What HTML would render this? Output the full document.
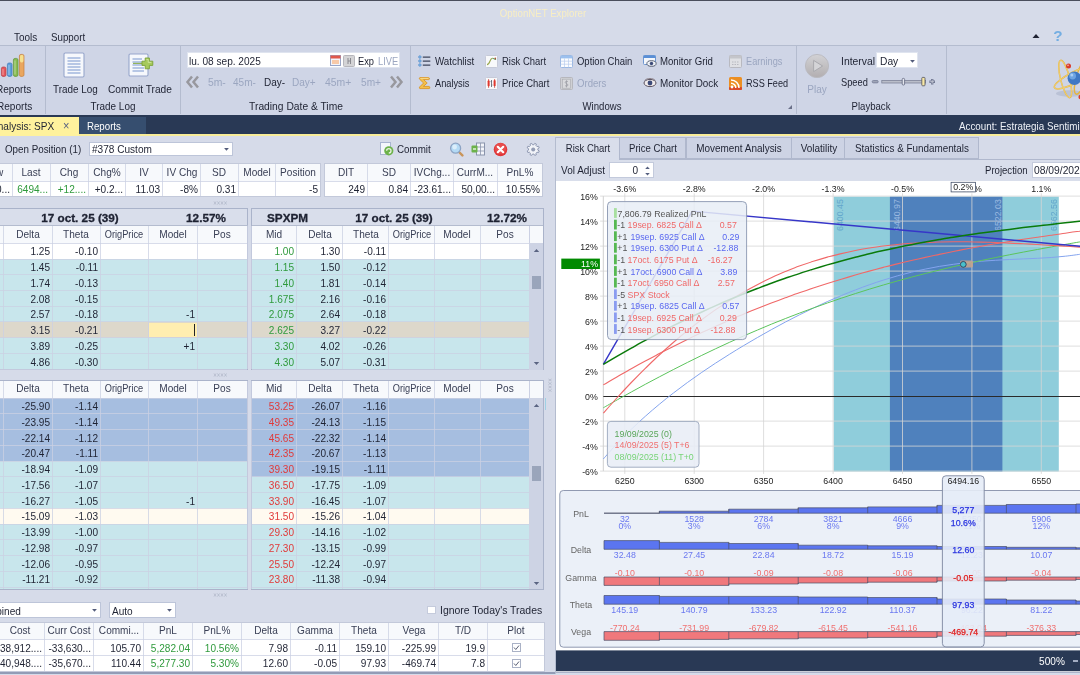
<!DOCTYPE html>
<html><head><meta charset="utf-8"><title>OptionNET Explorer</title>
<style>
html,body{margin:0;padding:0;}
body{width:1080px;height:675px;overflow:hidden;background:#d6dbe9;position:relative;font-family:"Liberation Sans",sans-serif;font-size:11px;color:#1e2232;}
#app{position:absolute;left:0;top:0;width:1080px;height:675px;overflow:hidden;opacity:.999;}
.t{position:absolute;height:16px;line-height:16px;white-space:nowrap;font-size:11px;transform:scaleX(.915);}
.r{position:absolute;}
.g{color:#9ba6c0;}
.b{font-weight:bold;transform:scaleX(1.02);-webkit-text-stroke:0.3px currentColor;}
.w{color:#fff;}
svg{position:absolute;overflow:hidden;}
</style></head>
<body>
<div id="app">
<div class="r" style="left:0.00px;top:0.00px;width:1080.00px;height:1.00px;background:#4a4e5c;"></div>
<div class="t " style="top:5.00px;left:443.30px;width:200px;text-align:center;transform:scaleX(0.880);color:#f8eec4;">OptionNET Explorer</div>
<div class="t " style="top:28.50px;left:13.50px;transform-origin:0 50%;transform:scaleX(0.903);">Tools</div>
<div class="t " style="top:28.50px;left:51.00px;transform-origin:0 50%;transform:scaleX(0.885);">Support</div>
<svg style="left:1031px;top:31.5px" width="10" height="8"><path d="M1.5 6 L5 2 L8.5 6 Z" fill="#1e2232"/></svg>
<div class="t b" style="top:27.90px;left:957.80px;width:200px;text-align:center;color:#74aee2;font-size:15px;-webkit-text-stroke:0;">?</div>
<div class="r" style="left:0.00px;top:45.50px;width:1080.00px;height:69.00px;background:#cfd5e6;"></div>
<div class="r" style="left:0.00px;top:45.00px;width:1080.00px;height:1.20px;background:#b4bccf;"></div>
<div class="r" style="left:44.80px;top:46.00px;width:1.20px;height:68.40px;background:#b4bccf;"></div>
<div class="r" style="left:179.90px;top:46.00px;width:1.20px;height:68.40px;background:#b4bccf;"></div>
<div class="r" style="left:409.90px;top:46.00px;width:1.20px;height:68.40px;background:#b4bccf;"></div>
<div class="r" style="left:795.60px;top:46.00px;width:1.20px;height:68.40px;background:#b4bccf;"></div>
<div class="r" style="left:946.10px;top:46.00px;width:1.20px;height:68.40px;background:#b4bccf;"></div>
<svg style="left:0px;top:52px" width="28" height="26" viewBox="0 0 28 26">
<rect x="1.4" y="15" width="4.6" height="9.4" rx="1.6" fill="#e4585e" stroke="#b43c44" stroke-width="0.7"/>
<rect x="7.4" y="11" width="4.6" height="13.4" rx="1.6" fill="#5f9fdc" stroke="#3f78b6" stroke-width="0.7"/>
<rect x="13.4" y="6.4" width="4.6" height="18" rx="1.6" fill="#88bb52" stroke="#5e963a" stroke-width="0.7"/>
<rect x="19.4" y="2.4" width="4.6" height="22" rx="1.6" fill="#eaa65e" stroke="#c4803c" stroke-width="0.7"/>
<rect x="20" y="3" width="3.4" height="7.4" rx="1.4" fill="#f6e08e"/>
<path d="M3 17v6M9 13v10M15 8.6v14" stroke="#fff" stroke-opacity=".35" stroke-width="1.2"/>
</svg>
<div class="t " style="top:80.50px;left:-3.80px;transform-origin:0 50%;">Reports</div>
<div class="t " style="top:98.20px;left:-3.00px;transform-origin:0 50%;">Reports</div>
<svg style="left:63px;top:52px" width="24" height="27" viewBox="0 0 24 27">
<rect x="1" y="1" width="20" height="24" rx="1.2" fill="#f6f8fc" stroke="#97a6cb" stroke-width="1.1"/>
<g stroke="#a3b6dd" stroke-width="1.5"><path d="M4.5 6H17.5M4.5 9H17.5M4.5 12H17.5M4.5 15H17.5M4.5 18H17.5M4.5 21H17.5"/></g>
</svg>
<div class="t " style="top:80.50px;left:52.80px;transform-origin:0 50%;transform:scaleX(0.901);">Trade Log</div>
<svg style="left:128px;top:52px" width="28" height="27" viewBox="0 0 28 27">
<rect x="1" y="2" width="19" height="22" rx="1.2" fill="#f6f8fc" stroke="#97a6cb" stroke-width="1.1"/>
<g stroke="#a3b6dd" stroke-width="1.5"><path d="M4.5 7H14M4.5 10H14M4.5 13H16M4.5 16H16M4.5 19H16"/></g>
<path d="M5 11.4H15" stroke="#8fb050" stroke-width="1.1"/>
<path d="M17.2 6H21.4V9.2H24.8V13.4H21.4V16.8H17.2V13.4H14V9.2H17.2Z" fill="#a6ca5c" stroke="#7aa338" stroke-width="0.9" stroke-linejoin="round"/>
<path d="M18.4 7.4H20.2V10.4H23.4" stroke="#d2e6a0" stroke-width="0.9" fill="none"/>
</svg>
<div class="t " style="top:80.50px;left:108.00px;transform-origin:0 50%;transform:scaleX(0.925);">Commit Trade</div>
<div class="t " style="top:98.20px;left:13.00px;width:200px;text-align:center;transform:scaleX(0.901);">Trade Log</div>
<div class="r" style="left:187.10px;top:52.40px;width:213.00px;height:16.00px;background:#fff;border:1px solid #dfe4ef;box-sizing:border-box;"></div>
<div class="t " style="top:52.70px;left:189.40px;transform-origin:0 50%;transform:scaleX(0.917);">lu. 08 sep. 2025</div>
<svg style="left:330px;top:55px" width="11" height="11" viewBox="0 0 11 11">
<rect x="0.5" y="0.5" width="10" height="10" fill="#f3f4fa" stroke="#9aa6c8"/><rect x="0.5" y="0.5" width="10" height="3" fill="#e0584c"/>
<rect x="2" y="5" width="7" height="4" fill="#f7c9a8"/></svg>
<svg style="left:343px;top:54.5px" width="12" height="12" viewBox="0 0 12 12">
<rect x="0.5" y="0.5" width="11" height="11" rx="1" fill="#d4d4d6" stroke="#b6b6bc"/><path d="M5 3v6M7.5 3v6M5 6h2.5" stroke="#8a8a90" stroke-width="1"/></svg>
<div class="t " style="top:52.70px;left:357.90px;transform-origin:0 50%;transform:scaleX(0.844);">Exp</div>
<div class="t g" style="top:52.70px;left:377.70px;transform-origin:0 50%;transform:scaleX(0.847);">LIVE</div>
<svg style="left:185px;top:75px" width="16" height="14" viewBox="0 0 16 14"><path d="M7 1.5L2.5 7L7 12.5M13 1.5L8.5 7L13 12.5" stroke="#98989e" stroke-width="2.5" fill="none"/></svg>
<svg style="left:388px;top:75px" width="16" height="14" viewBox="0 0 16 14"><path d="M3 1.5L7.5 7L3 12.5M9 1.5L13.5 7L9 12.5" stroke="#98989e" stroke-width="2.5" fill="none"/></svg>
<div class="t g" style="top:74.20px;left:207.90px;transform-origin:0 50%;transform:scaleX(0.940);">5m-</div>
<div class="t g" style="top:74.20px;left:233.20px;transform-origin:0 50%;transform:scaleX(0.910);">45m-</div>
<div class="t " style="top:74.20px;left:263.90px;transform-origin:0 50%;transform:scaleX(0.909);">Day-</div>
<div class="t g" style="top:74.20px;left:292.30px;transform-origin:0 50%;transform:scaleX(0.912);">Day+</div>
<div class="t g" style="top:74.20px;left:325.40px;transform-origin:0 50%;transform:scaleX(0.945);">45m+</div>
<div class="t g" style="top:74.20px;left:360.60px;transform-origin:0 50%;transform:scaleX(0.922);">5m+</div>
<div class="t " style="top:98.20px;left:195.90px;width:200px;text-align:center;transform:scaleX(0.934);">Trading Date &amp; Time</div>
<svg style="left:418px;top:54px" width="13" height="14" viewBox="0 0 13 14">
<g fill="#8cbdea" stroke="#4d88c9" stroke-width="0.7"><circle cx="1.9" cy="3" r="1.25"/><circle cx="1.9" cy="7" r="1.25"/><circle cx="1.9" cy="11" r="1.25"/></g>
<path d="M4.8 3H12.3M4.8 7H12.3M4.8 11H12.3" stroke="#3f465c" stroke-width="1.25"/></svg>
<div class="t " style="top:53.10px;left:434.60px;transform-origin:0 50%;transform:scaleX(0.889);">Watchlist</div>
<svg style="left:418px;top:75.5px" width="13" height="14" viewBox="0 0 13 14">
<path d="M1.8 1.6H10.6Q11.6 1.6 11.4 3.2L10.8 3.6H5.6L9.2 7L5.4 10.4H11.2Q12 10.6 11.8 12.2L11 12.6H1.8Q1 12 1.6 11L5.6 7L1.6 3.2Q1 2.2 1.8 1.6Z" fill="#f4c04a" stroke="#d9952a" stroke-width="0.9" stroke-linejoin="round"/><path d="M2.4 2.4H10.4" stroke="#fbe29a" stroke-width="0.8"/></svg>
<div class="t " style="top:74.90px;left:434.60px;transform-origin:0 50%;transform:scaleX(0.840);">Analysis</div>
<svg style="left:485px;top:54.5px" width="13" height="13" viewBox="0 0 13 13">
<rect x="0.5" y="0.5" width="12" height="12" rx="1" fill="#f8f9fb" stroke="#c6cad8"/>
<path d="M2 9.6C5.2 9.6 4.6 3.2 7.4 3.2" stroke="#9aa84e" stroke-width="1.1" fill="none"/><path d="M7.4 3.2C9.4 3.2 9.4 5 11 4.2" stroke="#6aa05c" stroke-width="1.1" fill="none"/><circle cx="10.3" cy="3.4" r="0.8" fill="#b04a3a"/></svg>
<div class="t " style="top:53.10px;left:501.70px;transform-origin:0 50%;transform:scaleX(0.857);">Risk Chart</div>
<svg style="left:485px;top:76.5px" width="13" height="13" viewBox="0 0 13 13">
<rect x="0.5" y="0.5" width="12" height="12" rx="1" fill="#f8f9fb" stroke="#c6cad8"/>
<path d="M3.6 2.2v8.6M9.6 2.2v8.6" stroke="#c8352b" stroke-width="0.8"/><rect x="2.6" y="3.6" width="2" height="5.6" rx="0.6" fill="#e0382e"/><rect x="8.6" y="3.2" width="2" height="5.8" rx="0.6" fill="#e0382e"/>
<path d="M6.5 3v7M5.6 4.6h0.9M6.5 8h0.9" stroke="#555a68" stroke-width="0.8"/></svg>
<div class="t " style="top:74.90px;left:501.70px;transform-origin:0 50%;transform:scaleX(0.860);">Price Chart</div>
<svg style="left:560px;top:54.5px" width="13" height="13" viewBox="0 0 13 13">
<rect x="0.5" y="0.5" width="12" height="12" rx="1" fill="#fcfdff" stroke="#9cb8e2"/><rect x="0.8" y="0.8" width="11.4" height="2.6" fill="#9cc0ee"/>
<path d="M0.5 6.2h12M0.5 9.2h12M4.5 3.4v9M8.5 3.4v9" stroke="#b9cdee" stroke-width="0.7"/></svg>
<div class="t " style="top:53.10px;left:576.80px;transform-origin:0 50%;transform:scaleX(0.861);">Option Chain</div>
<svg style="left:560px;top:76.5px" width="13" height="13" viewBox="0 0 13 13">
<rect x="0.5" y="0.5" width="12" height="12" rx="1" fill="#cfd0d4" stroke="#b6b7bd"/><rect x="2.6" y="2.2" width="7.8" height="9" fill="#d9dadd" stroke="#aaabb1" stroke-width="0.6"/>
<path d="M8 4.8C7.4 4 5.2 4 5.2 5.4S8 6.6 8 8S5.6 9.4 5 8.4M6.5 3.4v7" stroke="#9c9da4" stroke-width="0.8" fill="none"/></svg>
<div class="t g" style="top:74.90px;left:576.80px;transform-origin:0 50%;transform:scaleX(0.872);">Orders</div>
<svg style="left:643px;top:54px" width="14" height="14" viewBox="0 0 14 14">
<rect x="0.5" y="1.5" width="12" height="9" rx="1" fill="#f4f7fc" stroke="#6f97d0"/><rect x="0.5" y="1.5" width="12" height="2.5" fill="#5a8fd6"/>
<ellipse cx="8.5" cy="9.5" rx="4.6" ry="2.8" fill="#eef1f6" stroke="#4a5268" stroke-width="0.9"/><circle cx="8.5" cy="9.5" r="1.7" fill="#3c4a78"/></svg>
<div class="t " style="top:53.10px;left:660.00px;transform-origin:0 50%;transform:scaleX(0.874);">Monitor Grid</div>
<svg style="left:643px;top:76px" width="14" height="14" viewBox="0 0 14 14">
<ellipse cx="7" cy="7" rx="6" ry="3.6" fill="#f1ecec" stroke="#5a5260" stroke-width="1"/><circle cx="7" cy="7" r="2.4" fill="#3c4a78"/><path d="M1.5 4.5C4 1.8 10 1.8 12.5 4.5" stroke="#8a7f86" stroke-width="0.9" fill="none"/></svg>
<div class="t " style="top:74.90px;left:660.00px;transform-origin:0 50%;transform:scaleX(0.898);">Monitor Dock</div>
<svg style="left:729px;top:54.5px" width="13" height="13" viewBox="0 0 13 13">
<rect x="0.5" y="0.5" width="12" height="12" rx="1" fill="#dfe0e4" stroke="#b8b9c0"/><rect x="0.5" y="0.5" width="12" height="3" fill="#c4c5ca"/><path d="M3 7h7M3 9.5h7" stroke="#b8b9c0" stroke-width="1.2" stroke-dasharray="1.5 1"/></svg>
<div class="t g" style="top:53.10px;left:746.20px;transform-origin:0 50%;transform:scaleX(0.838);">Earnings</div>
<svg style="left:729px;top:76.5px" width="13" height="13" viewBox="0 0 13 13">
<rect x="0" y="0" width="13" height="13" rx="1.5" fill="#ec8f22"/><rect x="0" y="10" width="13" height="3" rx="1" fill="#d94a2a"/>
<circle cx="3" cy="10" r="1.4" fill="#fff"/><path d="M2 6.2A4.8 4.8 0 0 1 6.8 11M2 3A8 8 0 0 1 10 11" stroke="#fff" stroke-width="1.5" fill="none"/></svg>
<div class="t " style="top:74.90px;left:746.20px;transform-origin:0 50%;transform:scaleX(0.828);">RSS Feed</div>
<div class="t " style="top:98.20px;left:501.50px;width:200px;text-align:center;transform:scaleX(0.872);">Windows</div>
<svg style="left:787px;top:104px" width="6" height="6"><path d="M5 1V5H1Z" fill="#6a7088"/></svg>
<svg style="left:804px;top:53px" width="26" height="26" viewBox="0 0 26 26">
<defs><linearGradient id="pg" x1="0" y1="0" x2="0" y2="1"><stop offset="0" stop-color="#d2d2d5"/><stop offset="1" stop-color="#b2aeb0"/></linearGradient></defs>
<circle cx="13" cy="13" r="11.6" fill="url(#pg)" stroke="#b9b9be" stroke-width="0.9"/>
<path d="M9.6 7.4L18.6 13L9.6 18.6Z" fill="#d4d4d7" stroke="#a9a9ae" stroke-width="1" stroke-linejoin="round"/>
</svg>
<div class="t g" style="top:80.90px;left:716.70px;width:200px;text-align:center;">Play</div>
<div class="t " style="top:53.10px;left:841.00px;transform-origin:0 50%;transform:scaleX(0.943);">Interval</div>
<div class="r" style="left:876.20px;top:52.30px;width:42.30px;height:16.20px;background:#fff;border:1px solid #dfe4ef;box-sizing:border-box;"></div>
<div class="t " style="top:53.10px;left:880.00px;transform-origin:0 50%;transform:scaleX(0.930);">Day</div>
<svg style="left:908.5px;top:59px" width="7" height="5"><path d="M1.1 0.9H5.9L3.5 3.7Z" fill="#525b7a"/></svg>
<div class="t " style="top:74.20px;left:841.00px;transform-origin:0 50%;transform:scaleX(0.843);">Speed</div>
<svg style="left:870px;top:75px" width="68" height="14" viewBox="0 0 68 14">
<rect x="2.2" y="5.5" width="6" height="2.4" rx="1.1" fill="#9ea4b6" stroke="#6f7690" stroke-width="0.7"/>
<rect x="11.8" y="5.4" width="43.8" height="2.6" fill="#b9bdc9" stroke="#7d8398" stroke-width="0.8"/>
<rect x="32.2" y="3.4" width="2.4" height="6.6" rx="1" fill="#e4e6ee" stroke="#5f667e" stroke-width="0.8"/>
<rect x="51.8" y="2.4" width="3.2" height="8.4" rx="0.8" fill="#f8e8a4" stroke="#5f5f68" stroke-width="0.9"/>
<path d="M59.4 6.7h5.6M62.2 3.9v5.6" stroke="#6f7690" stroke-width="2.4"/><path d="M60.2 6.7h4M62.2 4.7v4" stroke="#c4c8d6" stroke-width="0.9"/>
</svg>
<div class="t " style="top:98.20px;left:771.20px;width:200px;text-align:center;transform:scaleX(0.872);">Playback</div>
<svg style="left:1050px;top:50px" width="30" height="56" viewBox="1050 50 30 56">
<ellipse cx="1070" cy="93.5" rx="14" ry="3.2" fill="#aab2c8" opacity=".55"/>
<g fill="none" stroke="#e6b43e" stroke-width="1.5">
<ellipse cx="1065.2" cy="79" rx="4.6" ry="19.2" transform="rotate(-14 1065.2 79)"/>
<ellipse cx="1074.5" cy="77.5" rx="22.5" ry="5.6" transform="rotate(-27 1074.5 77.5)"/>
<ellipse cx="1082" cy="76" rx="5.2" ry="19" transform="rotate(18 1082 76)"/></g>
<g fill="none" stroke="#f5dc8a" stroke-width="0.6">
<ellipse cx="1065.2" cy="79" rx="4.6" ry="19.2" transform="rotate(-14 1065.2 79)"/>
<ellipse cx="1074.5" cy="77.5" rx="22.5" ry="5.6" transform="rotate(-27 1074.5 77.5)"/></g>
<circle cx="1074.4" cy="78.2" r="6.8" fill="#3f78c4"/><circle cx="1072.6" cy="76" r="3.4" fill="#6ea4e2"/><circle cx="1071.8" cy="75" r="1.5" fill="#a9cdf4"/>
<circle cx="1068.5" cy="66" r="2.5" fill="#d93a2b"/><circle cx="1068" cy="65.3" r="0.9" fill="#f4a49a"/><circle cx="1080.6" cy="97" r="2.2" fill="#d93a2b"/>
</svg>
<div class="r" style="left:0.00px;top:114.60px;width:1080.00px;height:20.40px;background:#293955;"></div>
<div class="r" style="left:0.00px;top:134.30px;width:1080.00px;height:1.80px;background:#f8ec98;"></div>
<div class="r" style="left:0.00px;top:116.70px;width:78.70px;height:19.00px;background:#fff29d;"></div>
<div class="r" style="left:78.70px;top:117.20px;width:67.30px;height:17.10px;background:#364e6f;"></div>
<div class="t " style="top:118.00px;left:-8.60px;transform-origin:0 50%;">Analysis: SPX</div>
<div class="t " style="top:118.40px;left:62.70px;transform-origin:0 50%;font-size:12px;color:#586282;">×</div>
<div class="t w" style="top:118.00px;left:87.40px;transform-origin:0 50%;transform:scaleX(0.880);">Reports</div>
<div class="t w" style="top:117.60px;left:958.60px;transform-origin:0 50%;transform:scaleX(0.893);color:#eef1f7;">Account: Estrategia Sentimiento</div>
<div class="t " style="top:141.20px;left:4.70px;transform-origin:0 50%;transform:scaleX(0.890);">Open Position (1)</div>
<div class="r" style="left:89.40px;top:141.70px;width:144.00px;height:14.40px;background:#fff;border:1px solid #bdc5d9;box-sizing:border-box;"></div><div class="t " style="top:141.20px;left:92.00px;transform-origin:0 50%;">#378 Custom</div><svg style="left:222.9px;top:146.9px" width="7" height="5"><path d="M1.1 0.9H5.9L3.5 3.7Z" fill="#525b7a"/></svg>
<svg style="left:380px;top:142px" width="14" height="14" viewBox="0 0 14 14">
<rect x="0.5" y="0.5" width="10" height="12" fill="#f4f6fb" stroke="#a9b4d0"/><circle cx="8.8" cy="8.8" r="4.6" fill="#6cb24a"/><path d="M6.6 8.8A2.2 2.2 0 1 1 8.8 11" stroke="#e8f3df" stroke-width="1.3" fill="none"/></svg>
<div class="t " style="top:141.40px;left:396.50px;transform-origin:0 50%;transform:scaleX(0.890);">Commit</div>
<svg style="left:449px;top:141.5px" width="15" height="15" viewBox="0 0 15 15">
<path d="M10 10L13.4 13.4" stroke="#c9955a" stroke-width="2.4" stroke-linecap="round"/><circle cx="6.6" cy="6.2" r="5" fill="#b4daf5" stroke="#8da4c4" stroke-width="1.3"/><circle cx="5.6" cy="5" r="2.4" fill="#dbeefb"/></svg>
<svg style="left:470.5px;top:142px" width="14" height="14" viewBox="0 0 14 14">
<rect x="5.5" y="1" width="8" height="12" fill="#f4f6fb" stroke="#8a94ac"/><path d="M5.5 5h8M5.5 9h8M9.5 1v12" stroke="#8a94ac" stroke-width="0.8"/>
<rect x="0.5" y="3.5" width="6" height="7" rx="1" fill="#6cb24a"/><path d="M2 7h3" stroke="#fff" stroke-width="1.2"/></svg>
<svg style="left:492.5px;top:141.5px" width="15" height="15" viewBox="0 0 15 15">
<circle cx="7.5" cy="7.5" r="6.8" fill="#e0383a"/><circle cx="7.5" cy="6.5" r="5.5" fill="#ec5c58" opacity=".6"/><path d="M4.8 4.8L10.2 10.2M10.2 4.8L4.8 10.2" stroke="#fff" stroke-width="2.2" stroke-linecap="round"/></svg>
<svg style="left:525.5px;top:141.5px" width="15" height="15" viewBox="0 0 15 15">
<path d="M11.85 8.10L13.21 8.94L12.54 10.56L10.98 10.19L9.99 11.18L10.36 12.74L8.74 13.41L7.90 12.05L6.50 12.05L5.66 13.41L4.04 12.74L4.41 11.18L3.42 10.19L1.86 10.56L1.19 8.94L2.55 8.10L2.55 6.70L1.19 5.86L1.86 4.24L3.42 4.61L4.41 3.62L4.04 2.06L5.66 1.39L6.50 2.75L7.90 2.75L8.74 1.39L10.36 2.06L9.99 3.62L10.98 4.61L12.54 4.24L13.21 5.86L11.85 6.70Z" fill="#f1f3f8" stroke="#8791ab" stroke-width="0.9" stroke-linejoin="round"/><circle cx="7.2" cy="7.4" r="2" fill="#939cb4"/></svg>
<div class="r" style="left:-25.20px;top:163.90px;width:345.80px;height:17.30px;background:#f7f9fc;"></div>
<div class="t " style="top:163.75px;left:-106.40px;width:200px;text-align:center;color:#3a4056;">Low</div>
<div class="t " style="top:163.75px;left:-68.60px;width:200px;text-align:center;color:#3a4056;">Last</div>
<div class="t " style="top:163.75px;left:-30.80px;width:200px;text-align:center;color:#3a4056;">Chg</div>
<div class="t " style="top:163.75px;left:6.80px;width:200px;text-align:center;color:#3a4056;">Chg%</div>
<div class="t " style="top:163.75px;left:44.20px;width:200px;text-align:center;color:#3a4056;">IV</div>
<div class="t " style="top:163.75px;left:81.70px;width:200px;text-align:center;color:#3a4056;">IV Chg</div>
<div class="t " style="top:163.75px;left:119.45px;width:200px;text-align:center;color:#3a4056;">SD</div>
<div class="t " style="top:163.75px;left:156.85px;width:200px;text-align:center;color:#3a4056;">Model</div>
<div class="t " style="top:163.75px;left:198.00px;width:200px;text-align:center;color:#3a4056;">Position</div>
<div class="r" style="left:-25.20px;top:181.20px;width:345.80px;height:15.60px;background:#fff;"></div>
<div class="t " style="top:181.30px;left:-190.50px;width:200px;text-align:right;transform-origin:100% 50%;">6460...</div>
<div class="t " style="top:181.30px;left:-152.10px;width:200px;text-align:right;transform-origin:100% 50%;"><span style="color:#2f9a3c">6494...</span></div>
<div class="t " style="top:181.30px;left:-114.50px;width:200px;text-align:right;transform-origin:100% 50%;"><span style="color:#2f9a3c">+12....</span></div>
<div class="t " style="top:181.30px;left:-76.90px;width:200px;text-align:right;transform-origin:100% 50%;">+0.2...</div>
<div class="t " style="top:181.30px;left:-39.70px;width:200px;text-align:right;transform-origin:100% 50%;">11.03</div>
<div class="t " style="top:181.30px;left:-1.90px;width:200px;text-align:right;transform-origin:100% 50%;">-8%</div>
<div class="t " style="top:181.30px;left:35.80px;width:200px;text-align:right;transform-origin:100% 50%;">0.31</div>
<div class="t " style="top:181.30px;left:118.10px;width:200px;text-align:right;transform-origin:100% 50%;">-5</div>
<div class="r" style="left:-25.70px;top:163.90px;width:1.00px;height:32.90px;background:#cbd0e3;opacity:.75;"></div>
<div class="r" style="left:11.90px;top:163.90px;width:1.00px;height:32.90px;background:#cbd0e3;opacity:.75;"></div>
<div class="r" style="left:49.90px;top:163.90px;width:1.00px;height:32.90px;background:#cbd0e3;opacity:.75;"></div>
<div class="r" style="left:87.50px;top:163.90px;width:1.00px;height:32.90px;background:#cbd0e3;opacity:.75;"></div>
<div class="r" style="left:125.10px;top:163.90px;width:1.00px;height:32.90px;background:#cbd0e3;opacity:.75;"></div>
<div class="r" style="left:162.30px;top:163.90px;width:1.00px;height:32.90px;background:#cbd0e3;opacity:.75;"></div>
<div class="r" style="left:200.10px;top:163.90px;width:1.00px;height:32.90px;background:#cbd0e3;opacity:.75;"></div>
<div class="r" style="left:237.80px;top:163.90px;width:1.00px;height:32.90px;background:#cbd0e3;opacity:.75;"></div>
<div class="r" style="left:274.90px;top:163.90px;width:1.00px;height:32.90px;background:#cbd0e3;opacity:.75;"></div>
<div class="r" style="left:320.10px;top:163.90px;width:1.00px;height:32.90px;background:#cbd0e3;opacity:.75;"></div>
<div class="r" style="left:-25.20px;top:180.70px;width:345.80px;height:1.00px;background:#cbd0e3;opacity:.75;"></div>
<div class="r" style="left:-25.20px;top:196.30px;width:345.80px;height:1.00px;background:#cbd0e3;opacity:.75;"></div>
<div class="r" style="left:-1.00px;top:163.30px;width:322.10px;height:34.20px;background:transparent;border:1px solid #c3c9da;box-sizing:border-box;"></div>
<div class="r" style="left:324.40px;top:163.90px;width:217.80px;height:17.30px;background:#f7f9fc;"></div>
<div class="t " style="top:163.75px;left:245.80px;width:200px;text-align:center;color:#3a4056;">DIT</div>
<div class="t " style="top:163.75px;left:289.00px;width:200px;text-align:center;color:#3a4056;">SD</div>
<div class="t " style="top:163.75px;left:332.30px;width:200px;text-align:center;color:#3a4056;">IVChg...</div>
<div class="t " style="top:163.75px;left:375.40px;width:200px;text-align:center;color:#3a4056;">CurrM...</div>
<div class="t " style="top:163.75px;left:419.60px;width:200px;text-align:center;color:#3a4056;">PnL%</div>
<div class="r" style="left:324.40px;top:181.20px;width:217.80px;height:15.60px;background:#fff;"></div>
<div class="t " style="top:181.30px;left:164.70px;width:200px;text-align:right;transform-origin:100% 50%;">249</div>
<div class="t " style="top:181.30px;left:208.30px;width:200px;text-align:right;transform-origin:100% 50%;">0.84</div>
<div class="t " style="top:181.30px;left:251.30px;width:200px;text-align:right;transform-origin:100% 50%;">-23.61...</div>
<div class="t " style="top:181.30px;left:294.50px;width:200px;text-align:right;transform-origin:100% 50%;">50,00...</div>
<div class="t " style="top:181.30px;left:339.70px;width:200px;text-align:right;transform-origin:100% 50%;">10.55%</div>
<div class="r" style="left:323.90px;top:163.90px;width:1.00px;height:32.90px;background:#cbd0e3;opacity:.75;"></div>
<div class="r" style="left:366.70px;top:163.90px;width:1.00px;height:32.90px;background:#cbd0e3;opacity:.75;"></div>
<div class="r" style="left:410.30px;top:163.90px;width:1.00px;height:32.90px;background:#cbd0e3;opacity:.75;"></div>
<div class="r" style="left:453.30px;top:163.90px;width:1.00px;height:32.90px;background:#cbd0e3;opacity:.75;"></div>
<div class="r" style="left:496.50px;top:163.90px;width:1.00px;height:32.90px;background:#cbd0e3;opacity:.75;"></div>
<div class="r" style="left:541.70px;top:163.90px;width:1.00px;height:32.90px;background:#cbd0e3;opacity:.75;"></div>
<div class="r" style="left:324.40px;top:180.70px;width:217.80px;height:1.00px;background:#cbd0e3;opacity:.75;"></div>
<div class="r" style="left:324.40px;top:196.30px;width:217.80px;height:1.00px;background:#cbd0e3;opacity:.75;"></div>
<div class="r" style="left:323.90px;top:163.30px;width:218.80px;height:34.20px;background:transparent;border:1px solid #c3c9da;box-sizing:border-box;"></div>
<svg style="left:213.4px;top:200.6px" width="14" height="4" viewBox="0 0 14 4"><path d="M1 0.5L3 3.5M3 0.5L1 3.5M4.5 0.5L6.5 3.5M6.5 0.5L4.5 3.5M8 0.5L10 3.5M10 0.5L8 3.5M11.5 0.5L13.5 3.5M13.5 0.5L11.5 3.5" stroke="#aeb4c6" stroke-width="0.7"/></svg>
<div class="r" style="left:-1.00px;top:207.60px;width:249.00px;height:162.40px;background:#d9deeb;border:1px solid #aab3ca;box-sizing:border-box;"></div>
<div class="r" style="left:0.00px;top:225.20px;width:247.50px;height:1.00px;background:#b4bccf;"></div>
<div class="t b" style="top:209.80px;left:-20.50px;width:200px;text-align:center;font-size:11.5px;">17 oct. 25 (39)</div>
<div class="t b" style="top:209.80px;left:105.50px;width:200px;text-align:center;font-size:11.5px;">12.57%</div>
<div class="r" style="left:-45.00px;top:226.00px;width:292.00px;height:17.30px;background:#f7f9fc;"></div>
<div class="t " style="top:225.85px;left:-120.85px;width:200px;text-align:center;color:#3a4056;">Mid</div>
<div class="t " style="top:225.85px;left:-72.35px;width:200px;text-align:center;color:#3a4056;">Delta</div>
<div class="t " style="top:225.85px;left:-23.85px;width:200px;text-align:center;color:#3a4056;">Theta</div>
<div class="t " style="top:225.85px;left:24.45px;width:200px;text-align:center;transform:scaleX(0.840);color:#3a4056;">OrigPrice</div>
<div class="t " style="top:225.85px;left:73.00px;width:200px;text-align:center;color:#3a4056;">Model</div>
<div class="t " style="top:225.85px;left:122.20px;width:200px;text-align:center;color:#3a4056;">Pos</div>
<div class="r" style="left:-45.00px;top:243.30px;width:292.00px;height:15.73px;background:#fff;"></div>
<div class="t " style="top:243.47px;left:-199.60px;width:200px;text-align:right;transform-origin:100% 50%;color:#2f9a3c;">0.95</div>
<div class="t " style="top:243.47px;left:-150.50px;width:200px;text-align:right;transform-origin:100% 50%;">1.25</div>
<div class="t " style="top:243.47px;left:-102.20px;width:200px;text-align:right;transform-origin:100% 50%;">-0.10</div>
<div class="r" style="left:-45.00px;top:259.03px;width:292.00px;height:15.73px;background:#c8e6ec;"></div>
<div class="t " style="top:259.20px;left:-199.60px;width:200px;text-align:right;transform-origin:100% 50%;color:#2f9a3c;">1.10</div>
<div class="t " style="top:259.20px;left:-150.50px;width:200px;text-align:right;transform-origin:100% 50%;">1.45</div>
<div class="t " style="top:259.20px;left:-102.20px;width:200px;text-align:right;transform-origin:100% 50%;">-0.11</div>
<div class="r" style="left:-45.00px;top:274.76px;width:292.00px;height:15.73px;background:#c8e6ec;"></div>
<div class="t " style="top:274.93px;left:-199.60px;width:200px;text-align:right;transform-origin:100% 50%;color:#2f9a3c;">1.35</div>
<div class="t " style="top:274.93px;left:-150.50px;width:200px;text-align:right;transform-origin:100% 50%;">1.74</div>
<div class="t " style="top:274.93px;left:-102.20px;width:200px;text-align:right;transform-origin:100% 50%;">-0.13</div>
<div class="r" style="left:-45.00px;top:290.49px;width:292.00px;height:15.73px;background:#c8e6ec;"></div>
<div class="t " style="top:290.66px;left:-199.60px;width:200px;text-align:right;transform-origin:100% 50%;color:#2f9a3c;">1.625</div>
<div class="t " style="top:290.66px;left:-150.50px;width:200px;text-align:right;transform-origin:100% 50%;">2.08</div>
<div class="t " style="top:290.66px;left:-102.20px;width:200px;text-align:right;transform-origin:100% 50%;">-0.15</div>
<div class="r" style="left:-45.00px;top:306.22px;width:292.00px;height:15.73px;background:#c8e6ec;"></div>
<div class="t " style="top:306.39px;left:-199.60px;width:200px;text-align:right;transform-origin:100% 50%;color:#2f9a3c;">2.025</div>
<div class="t " style="top:306.39px;left:-150.50px;width:200px;text-align:right;transform-origin:100% 50%;">2.57</div>
<div class="t " style="top:306.39px;left:-102.20px;width:200px;text-align:right;transform-origin:100% 50%;">-0.18</div>
<div class="t " style="top:306.39px;left:-5.10px;width:200px;text-align:right;transform-origin:100% 50%;">-1</div>
<div class="r" style="left:-45.00px;top:321.95px;width:292.00px;height:15.73px;background:#ddd8cb;"></div>
<div class="t " style="top:322.12px;left:-199.60px;width:200px;text-align:right;transform-origin:100% 50%;color:#2f9a3c;">2.575</div>
<div class="t " style="top:322.12px;left:-150.50px;width:200px;text-align:right;transform-origin:100% 50%;">3.15</div>
<div class="t " style="top:322.12px;left:-102.20px;width:200px;text-align:right;transform-origin:100% 50%;">-0.21</div>
<div class="r" style="left:-45.00px;top:337.68px;width:292.00px;height:15.73px;background:#c8e6ec;"></div>
<div class="t " style="top:337.85px;left:-199.60px;width:200px;text-align:right;transform-origin:100% 50%;color:#2f9a3c;">3.25</div>
<div class="t " style="top:337.85px;left:-150.50px;width:200px;text-align:right;transform-origin:100% 50%;">3.89</div>
<div class="t " style="top:337.85px;left:-102.20px;width:200px;text-align:right;transform-origin:100% 50%;">-0.25</div>
<div class="t " style="top:337.85px;left:-5.10px;width:200px;text-align:right;transform-origin:100% 50%;">+1</div>
<div class="r" style="left:-45.00px;top:353.41px;width:292.00px;height:15.73px;background:#c8e6ec;"></div>
<div class="t " style="top:353.58px;left:-199.60px;width:200px;text-align:right;transform-origin:100% 50%;color:#2f9a3c;">4.25</div>
<div class="t " style="top:353.58px;left:-150.50px;width:200px;text-align:right;transform-origin:100% 50%;">4.86</div>
<div class="t " style="top:353.58px;left:-102.20px;width:200px;text-align:right;transform-origin:100% 50%;">-0.30</div>
<div class="r" style="left:-45.50px;top:226.00px;width:1.00px;height:143.14px;background:#cbd0e3;opacity:.75;"></div>
<div class="r" style="left:2.80px;top:226.00px;width:1.00px;height:143.14px;background:#cbd0e3;opacity:.75;"></div>
<div class="r" style="left:51.50px;top:226.00px;width:1.00px;height:143.14px;background:#cbd0e3;opacity:.75;"></div>
<div class="r" style="left:99.80px;top:226.00px;width:1.00px;height:143.14px;background:#cbd0e3;opacity:.75;"></div>
<div class="r" style="left:148.10px;top:226.00px;width:1.00px;height:143.14px;background:#cbd0e3;opacity:.75;"></div>
<div class="r" style="left:196.90px;top:226.00px;width:1.00px;height:143.14px;background:#cbd0e3;opacity:.75;"></div>
<div class="r" style="left:246.50px;top:226.00px;width:1.00px;height:143.14px;background:#cbd0e3;opacity:.75;"></div>
<div class="r" style="left:-45.00px;top:242.80px;width:292.00px;height:1.00px;background:#cbd0e3;opacity:.75;"></div>
<div class="r" style="left:-45.00px;top:258.53px;width:292.00px;height:1.00px;background:#cbd0e3;opacity:.75;"></div>
<div class="r" style="left:-45.00px;top:274.26px;width:292.00px;height:1.00px;background:#cbd0e3;opacity:.75;"></div>
<div class="r" style="left:-45.00px;top:289.99px;width:292.00px;height:1.00px;background:#cbd0e3;opacity:.75;"></div>
<div class="r" style="left:-45.00px;top:305.72px;width:292.00px;height:1.00px;background:#cbd0e3;opacity:.75;"></div>
<div class="r" style="left:-45.00px;top:321.45px;width:292.00px;height:1.00px;background:#cbd0e3;opacity:.75;"></div>
<div class="r" style="left:-45.00px;top:337.18px;width:292.00px;height:1.00px;background:#cbd0e3;opacity:.75;"></div>
<div class="r" style="left:-45.00px;top:352.91px;width:292.00px;height:1.00px;background:#cbd0e3;opacity:.75;"></div>
<div class="r" style="left:-45.00px;top:368.64px;width:292.00px;height:1.00px;background:#cbd0e3;opacity:.75;"></div>
<div class="r" style="left:149.20px;top:322.60px;width:47.80px;height:14.80px;background:#ffeeb0;"></div>
<div class="r" style="left:194.30px;top:324.20px;width:0.90px;height:11.50px;background:#222;"></div>
<div class="r" style="left:250.90px;top:207.60px;width:293.50px;height:162.40px;background:#d9deeb;border:1px solid #aab3ca;box-sizing:border-box;"></div>
<div class="r" style="left:251.90px;top:225.20px;width:291.50px;height:1.00px;background:#b4bccf;"></div>
<div class="t b" style="top:209.80px;left:267.30px;transform-origin:0 50%;font-size:11.5px;">SPXPM</div>
<div class="t b" style="top:209.80px;left:294.20px;width:200px;text-align:center;font-size:11.5px;">17 oct. 25 (39)</div>
<div class="t b" style="top:209.80px;left:406.80px;width:200px;text-align:center;font-size:11.5px;">12.72%</div>
<div class="r" style="left:251.80px;top:226.00px;width:277.50px;height:17.30px;background:#f7f9fc;"></div>
<div class="t " style="top:225.85px;left:174.25px;width:200px;text-align:center;color:#3a4056;">Mid</div>
<div class="t " style="top:225.85px;left:219.60px;width:200px;text-align:center;color:#3a4056;">Delta</div>
<div class="t " style="top:225.85px;left:265.60px;width:200px;text-align:center;color:#3a4056;">Theta</div>
<div class="t " style="top:225.85px;left:311.60px;width:200px;text-align:center;transform:scaleX(0.840);color:#3a4056;">OrigPrice</div>
<div class="t " style="top:225.85px;left:357.25px;width:200px;text-align:center;color:#3a4056;">Model</div>
<div class="t " style="top:225.85px;left:404.65px;width:200px;text-align:center;color:#3a4056;">Pos</div>
<div class="r" style="left:251.80px;top:243.30px;width:277.50px;height:15.73px;background:#fff;"></div>
<div class="t " style="top:243.47px;left:94.20px;width:200px;text-align:right;transform-origin:100% 50%;color:#2f9a3c;">1.00</div>
<div class="t " style="top:243.47px;left:140.00px;width:200px;text-align:right;transform-origin:100% 50%;">1.30</div>
<div class="t " style="top:243.47px;left:186.20px;width:200px;text-align:right;transform-origin:100% 50%;">-0.11</div>
<div class="r" style="left:251.80px;top:259.03px;width:277.50px;height:15.73px;background:#c8e6ec;"></div>
<div class="t " style="top:259.20px;left:94.20px;width:200px;text-align:right;transform-origin:100% 50%;color:#2f9a3c;">1.15</div>
<div class="t " style="top:259.20px;left:140.00px;width:200px;text-align:right;transform-origin:100% 50%;">1.50</div>
<div class="t " style="top:259.20px;left:186.20px;width:200px;text-align:right;transform-origin:100% 50%;">-0.12</div>
<div class="r" style="left:251.80px;top:274.76px;width:277.50px;height:15.73px;background:#c8e6ec;"></div>
<div class="t " style="top:274.93px;left:94.20px;width:200px;text-align:right;transform-origin:100% 50%;color:#2f9a3c;">1.40</div>
<div class="t " style="top:274.93px;left:140.00px;width:200px;text-align:right;transform-origin:100% 50%;">1.81</div>
<div class="t " style="top:274.93px;left:186.20px;width:200px;text-align:right;transform-origin:100% 50%;">-0.14</div>
<div class="r" style="left:251.80px;top:290.49px;width:277.50px;height:15.73px;background:#c8e6ec;"></div>
<div class="t " style="top:290.66px;left:94.20px;width:200px;text-align:right;transform-origin:100% 50%;color:#2f9a3c;">1.675</div>
<div class="t " style="top:290.66px;left:140.00px;width:200px;text-align:right;transform-origin:100% 50%;">2.16</div>
<div class="t " style="top:290.66px;left:186.20px;width:200px;text-align:right;transform-origin:100% 50%;">-0.16</div>
<div class="r" style="left:251.80px;top:306.22px;width:277.50px;height:15.73px;background:#c8e6ec;"></div>
<div class="t " style="top:306.39px;left:94.20px;width:200px;text-align:right;transform-origin:100% 50%;color:#2f9a3c;">2.075</div>
<div class="t " style="top:306.39px;left:140.00px;width:200px;text-align:right;transform-origin:100% 50%;">2.64</div>
<div class="t " style="top:306.39px;left:186.20px;width:200px;text-align:right;transform-origin:100% 50%;">-0.18</div>
<div class="r" style="left:251.80px;top:321.95px;width:277.50px;height:15.73px;background:#ddd8cb;"></div>
<div class="t " style="top:322.12px;left:94.20px;width:200px;text-align:right;transform-origin:100% 50%;color:#2f9a3c;">2.625</div>
<div class="t " style="top:322.12px;left:140.00px;width:200px;text-align:right;transform-origin:100% 50%;">3.27</div>
<div class="t " style="top:322.12px;left:186.20px;width:200px;text-align:right;transform-origin:100% 50%;">-0.22</div>
<div class="r" style="left:251.80px;top:337.68px;width:277.50px;height:15.73px;background:#c8e6ec;"></div>
<div class="t " style="top:337.85px;left:94.20px;width:200px;text-align:right;transform-origin:100% 50%;color:#2f9a3c;">3.30</div>
<div class="t " style="top:337.85px;left:140.00px;width:200px;text-align:right;transform-origin:100% 50%;">4.02</div>
<div class="t " style="top:337.85px;left:186.20px;width:200px;text-align:right;transform-origin:100% 50%;">-0.26</div>
<div class="r" style="left:251.80px;top:353.41px;width:277.50px;height:15.73px;background:#c8e6ec;"></div>
<div class="t " style="top:353.58px;left:94.20px;width:200px;text-align:right;transform-origin:100% 50%;color:#2f9a3c;">4.30</div>
<div class="t " style="top:353.58px;left:140.00px;width:200px;text-align:right;transform-origin:100% 50%;">5.07</div>
<div class="t " style="top:353.58px;left:186.20px;width:200px;text-align:right;transform-origin:100% 50%;">-0.31</div>
<div class="r" style="left:251.30px;top:226.00px;width:1.00px;height:143.14px;background:#cbd0e3;opacity:.75;"></div>
<div class="r" style="left:296.20px;top:226.00px;width:1.00px;height:143.14px;background:#cbd0e3;opacity:.75;"></div>
<div class="r" style="left:342.00px;top:226.00px;width:1.00px;height:143.14px;background:#cbd0e3;opacity:.75;"></div>
<div class="r" style="left:388.20px;top:226.00px;width:1.00px;height:143.14px;background:#cbd0e3;opacity:.75;"></div>
<div class="r" style="left:434.00px;top:226.00px;width:1.00px;height:143.14px;background:#cbd0e3;opacity:.75;"></div>
<div class="r" style="left:479.50px;top:226.00px;width:1.00px;height:143.14px;background:#cbd0e3;opacity:.75;"></div>
<div class="r" style="left:528.80px;top:226.00px;width:1.00px;height:143.14px;background:#cbd0e3;opacity:.75;"></div>
<div class="r" style="left:251.80px;top:242.80px;width:277.50px;height:1.00px;background:#cbd0e3;opacity:.75;"></div>
<div class="r" style="left:251.80px;top:258.53px;width:277.50px;height:1.00px;background:#cbd0e3;opacity:.75;"></div>
<div class="r" style="left:251.80px;top:274.26px;width:277.50px;height:1.00px;background:#cbd0e3;opacity:.75;"></div>
<div class="r" style="left:251.80px;top:289.99px;width:277.50px;height:1.00px;background:#cbd0e3;opacity:.75;"></div>
<div class="r" style="left:251.80px;top:305.72px;width:277.50px;height:1.00px;background:#cbd0e3;opacity:.75;"></div>
<div class="r" style="left:251.80px;top:321.45px;width:277.50px;height:1.00px;background:#cbd0e3;opacity:.75;"></div>
<div class="r" style="left:251.80px;top:337.18px;width:277.50px;height:1.00px;background:#cbd0e3;opacity:.75;"></div>
<div class="r" style="left:251.80px;top:352.91px;width:277.50px;height:1.00px;background:#cbd0e3;opacity:.75;"></div>
<div class="r" style="left:251.80px;top:368.64px;width:277.50px;height:1.00px;background:#cbd0e3;opacity:.75;"></div>
<div class="r" style="left:529.30px;top:226.00px;width:14.20px;height:17.30px;background:#f7f9fc;"></div>
<div class="r" style="left:528.80px;top:226.00px;width:1.00px;height:17.30px;background:#cbd0e3;"></div>
<div class="r" style="left:529.30px;top:243.30px;width:14.10px;height:126.50px;background:#cdd3e4;"></div><svg style="left:533.3px;top:248.3px" width="7" height="5"><path d="M0.8 4.1L3.5 1L6.2 4.1Z" fill="#5a6482"/></svg><svg style="left:533.3px;top:360.8px" width="7" height="5"><path d="M0.8 0.9H6.2L3.5 4Z" fill="#5a6482"/></svg><div class="r" style="left:532.10px;top:275.50px;width:8.80px;height:13.80px;background:#9aa5bb;"></div>
<svg style="left:213.4px;top:372.8px" width="14" height="4" viewBox="0 0 14 4"><path d="M1 0.5L3 3.5M3 0.5L1 3.5M4.5 0.5L6.5 3.5M6.5 0.5L4.5 3.5M8 0.5L10 3.5M10 0.5L8 3.5M11.5 0.5L13.5 3.5M13.5 0.5L11.5 3.5" stroke="#aeb4c6" stroke-width="0.7"/></svg>
<div class="r" style="left:-1.00px;top:380.20px;width:249.00px;height:210.00px;background:#d9deeb;border:1px solid #aab3ca;box-sizing:border-box;"></div>
<div class="r" style="left:-45.00px;top:380.70px;width:292.00px;height:17.30px;background:#f7f9fc;"></div>
<div class="t " style="top:379.75px;left:-120.85px;width:200px;text-align:center;color:#3a4056;">Mid</div>
<div class="t " style="top:379.75px;left:-72.35px;width:200px;text-align:center;color:#3a4056;">Delta</div>
<div class="t " style="top:379.75px;left:-23.85px;width:200px;text-align:center;color:#3a4056;">Theta</div>
<div class="t " style="top:379.75px;left:24.45px;width:200px;text-align:center;transform:scaleX(0.840);color:#3a4056;">OrigPrice</div>
<div class="t " style="top:379.75px;left:73.00px;width:200px;text-align:center;color:#3a4056;">Model</div>
<div class="t " style="top:379.75px;left:122.20px;width:200px;text-align:center;color:#3a4056;">Pos</div>
<div class="r" style="left:-45.00px;top:398.00px;width:292.00px;height:15.75px;background:#a6bee0;"></div>
<div class="t " style="top:398.18px;left:-199.60px;width:200px;text-align:right;transform-origin:100% 50%;color:#e03a3a;">52.95</div>
<div class="t " style="top:398.18px;left:-150.50px;width:200px;text-align:right;transform-origin:100% 50%;">-25.90</div>
<div class="t " style="top:398.18px;left:-102.20px;width:200px;text-align:right;transform-origin:100% 50%;">-1.14</div>
<div class="r" style="left:-45.00px;top:413.75px;width:292.00px;height:15.75px;background:#a6bee0;"></div>
<div class="t " style="top:413.93px;left:-199.60px;width:200px;text-align:right;transform-origin:100% 50%;color:#e03a3a;">49.05</div>
<div class="t " style="top:413.93px;left:-150.50px;width:200px;text-align:right;transform-origin:100% 50%;">-23.95</div>
<div class="t " style="top:413.93px;left:-102.20px;width:200px;text-align:right;transform-origin:100% 50%;">-1.14</div>
<div class="r" style="left:-45.00px;top:429.50px;width:292.00px;height:15.75px;background:#a6bee0;"></div>
<div class="t " style="top:429.68px;left:-199.60px;width:200px;text-align:right;transform-origin:100% 50%;color:#e03a3a;">45.35</div>
<div class="t " style="top:429.68px;left:-150.50px;width:200px;text-align:right;transform-origin:100% 50%;">-22.14</div>
<div class="t " style="top:429.68px;left:-102.20px;width:200px;text-align:right;transform-origin:100% 50%;">-1.12</div>
<div class="r" style="left:-45.00px;top:445.25px;width:292.00px;height:15.75px;background:#a6bee0;"></div>
<div class="t " style="top:445.43px;left:-199.60px;width:200px;text-align:right;transform-origin:100% 50%;color:#e03a3a;">42.05</div>
<div class="t " style="top:445.43px;left:-150.50px;width:200px;text-align:right;transform-origin:100% 50%;">-20.47</div>
<div class="t " style="top:445.43px;left:-102.20px;width:200px;text-align:right;transform-origin:100% 50%;">-1.11</div>
<div class="r" style="left:-45.00px;top:461.00px;width:292.00px;height:15.75px;background:#c8e6ec;"></div>
<div class="t " style="top:461.18px;left:-199.60px;width:200px;text-align:right;transform-origin:100% 50%;color:#e03a3a;">39.00</div>
<div class="t " style="top:461.18px;left:-150.50px;width:200px;text-align:right;transform-origin:100% 50%;">-18.94</div>
<div class="t " style="top:461.18px;left:-102.20px;width:200px;text-align:right;transform-origin:100% 50%;">-1.09</div>
<div class="r" style="left:-45.00px;top:476.75px;width:292.00px;height:15.75px;background:#c8e6ec;"></div>
<div class="t " style="top:476.93px;left:-199.60px;width:200px;text-align:right;transform-origin:100% 50%;color:#e03a3a;">36.20</div>
<div class="t " style="top:476.93px;left:-150.50px;width:200px;text-align:right;transform-origin:100% 50%;">-17.56</div>
<div class="t " style="top:476.93px;left:-102.20px;width:200px;text-align:right;transform-origin:100% 50%;">-1.07</div>
<div class="r" style="left:-45.00px;top:492.50px;width:292.00px;height:15.75px;background:#c8e6ec;"></div>
<div class="t " style="top:492.68px;left:-199.60px;width:200px;text-align:right;transform-origin:100% 50%;color:#e03a3a;">33.60</div>
<div class="t " style="top:492.68px;left:-150.50px;width:200px;text-align:right;transform-origin:100% 50%;">-16.27</div>
<div class="t " style="top:492.68px;left:-102.20px;width:200px;text-align:right;transform-origin:100% 50%;">-1.05</div>
<div class="t " style="top:492.68px;left:-5.10px;width:200px;text-align:right;transform-origin:100% 50%;">-1</div>
<div class="r" style="left:-45.00px;top:508.25px;width:292.00px;height:15.75px;background:#fffaf0;"></div>
<div class="t " style="top:508.42px;left:-199.60px;width:200px;text-align:right;transform-origin:100% 50%;color:#e03a3a;">31.20</div>
<div class="t " style="top:508.42px;left:-150.50px;width:200px;text-align:right;transform-origin:100% 50%;">-15.09</div>
<div class="t " style="top:508.42px;left:-102.20px;width:200px;text-align:right;transform-origin:100% 50%;">-1.03</div>
<div class="r" style="left:-45.00px;top:524.00px;width:292.00px;height:15.75px;background:#c8e6ec;"></div>
<div class="t " style="top:524.17px;left:-199.60px;width:200px;text-align:right;transform-origin:100% 50%;color:#e03a3a;">29.00</div>
<div class="t " style="top:524.17px;left:-150.50px;width:200px;text-align:right;transform-origin:100% 50%;">-13.99</div>
<div class="t " style="top:524.17px;left:-102.20px;width:200px;text-align:right;transform-origin:100% 50%;">-1.00</div>
<div class="r" style="left:-45.00px;top:539.75px;width:292.00px;height:15.75px;background:#c8e6ec;"></div>
<div class="t " style="top:539.92px;left:-199.60px;width:200px;text-align:right;transform-origin:100% 50%;color:#e03a3a;">27.00</div>
<div class="t " style="top:539.92px;left:-150.50px;width:200px;text-align:right;transform-origin:100% 50%;">-12.98</div>
<div class="t " style="top:539.92px;left:-102.20px;width:200px;text-align:right;transform-origin:100% 50%;">-0.97</div>
<div class="r" style="left:-45.00px;top:555.50px;width:292.00px;height:15.75px;background:#c8e6ec;"></div>
<div class="t " style="top:555.67px;left:-199.60px;width:200px;text-align:right;transform-origin:100% 50%;color:#e03a3a;">25.20</div>
<div class="t " style="top:555.67px;left:-150.50px;width:200px;text-align:right;transform-origin:100% 50%;">-12.06</div>
<div class="t " style="top:555.67px;left:-102.20px;width:200px;text-align:right;transform-origin:100% 50%;">-0.95</div>
<div class="r" style="left:-45.00px;top:571.25px;width:292.00px;height:15.75px;background:#c8e6ec;"></div>
<div class="t " style="top:571.42px;left:-199.60px;width:200px;text-align:right;transform-origin:100% 50%;color:#e03a3a;">23.50</div>
<div class="t " style="top:571.42px;left:-150.50px;width:200px;text-align:right;transform-origin:100% 50%;">-11.21</div>
<div class="t " style="top:571.42px;left:-102.20px;width:200px;text-align:right;transform-origin:100% 50%;">-0.92</div>
<div class="r" style="left:-45.00px;top:587.00px;width:292.00px;height:2.60px;background:#c8e6ec;"></div>
<div class="r" style="left:-45.50px;top:380.70px;width:1.00px;height:208.90px;background:#cbd0e3;opacity:.75;"></div>
<div class="r" style="left:2.80px;top:380.70px;width:1.00px;height:208.90px;background:#cbd0e3;opacity:.75;"></div>
<div class="r" style="left:51.50px;top:380.70px;width:1.00px;height:208.90px;background:#cbd0e3;opacity:.75;"></div>
<div class="r" style="left:99.80px;top:380.70px;width:1.00px;height:208.90px;background:#cbd0e3;opacity:.75;"></div>
<div class="r" style="left:148.10px;top:380.70px;width:1.00px;height:208.90px;background:#cbd0e3;opacity:.75;"></div>
<div class="r" style="left:196.90px;top:380.70px;width:1.00px;height:208.90px;background:#cbd0e3;opacity:.75;"></div>
<div class="r" style="left:246.50px;top:380.70px;width:1.00px;height:208.90px;background:#cbd0e3;opacity:.75;"></div>
<div class="r" style="left:-45.00px;top:397.50px;width:292.00px;height:1.00px;background:#cbd0e3;opacity:.75;"></div>
<div class="r" style="left:-45.00px;top:413.25px;width:292.00px;height:1.00px;background:#cbd0e3;opacity:.75;"></div>
<div class="r" style="left:-45.00px;top:429.00px;width:292.00px;height:1.00px;background:#cbd0e3;opacity:.75;"></div>
<div class="r" style="left:-45.00px;top:444.75px;width:292.00px;height:1.00px;background:#cbd0e3;opacity:.75;"></div>
<div class="r" style="left:-45.00px;top:460.50px;width:292.00px;height:1.00px;background:#cbd0e3;opacity:.75;"></div>
<div class="r" style="left:-45.00px;top:476.25px;width:292.00px;height:1.00px;background:#cbd0e3;opacity:.75;"></div>
<div class="r" style="left:-45.00px;top:492.00px;width:292.00px;height:1.00px;background:#cbd0e3;opacity:.75;"></div>
<div class="r" style="left:-45.00px;top:507.75px;width:292.00px;height:1.00px;background:#cbd0e3;opacity:.75;"></div>
<div class="r" style="left:-45.00px;top:523.50px;width:292.00px;height:1.00px;background:#cbd0e3;opacity:.75;"></div>
<div class="r" style="left:-45.00px;top:539.25px;width:292.00px;height:1.00px;background:#cbd0e3;opacity:.75;"></div>
<div class="r" style="left:-45.00px;top:555.00px;width:292.00px;height:1.00px;background:#cbd0e3;opacity:.75;"></div>
<div class="r" style="left:-45.00px;top:570.75px;width:292.00px;height:1.00px;background:#cbd0e3;opacity:.75;"></div>
<div class="r" style="left:-45.00px;top:586.50px;width:292.00px;height:1.00px;background:#cbd0e3;opacity:.75;"></div>
<div class="r" style="left:250.90px;top:380.20px;width:293.50px;height:210.00px;background:#d9deeb;border:1px solid #aab3ca;box-sizing:border-box;"></div>
<div class="r" style="left:251.80px;top:380.70px;width:277.50px;height:17.30px;background:#f7f9fc;"></div>
<div class="t " style="top:379.75px;left:174.25px;width:200px;text-align:center;color:#3a4056;">Mid</div>
<div class="t " style="top:379.75px;left:219.60px;width:200px;text-align:center;color:#3a4056;">Delta</div>
<div class="t " style="top:379.75px;left:265.60px;width:200px;text-align:center;color:#3a4056;">Theta</div>
<div class="t " style="top:379.75px;left:311.60px;width:200px;text-align:center;transform:scaleX(0.840);color:#3a4056;">OrigPrice</div>
<div class="t " style="top:379.75px;left:357.25px;width:200px;text-align:center;color:#3a4056;">Model</div>
<div class="t " style="top:379.75px;left:404.65px;width:200px;text-align:center;color:#3a4056;">Pos</div>
<div class="r" style="left:251.80px;top:398.00px;width:277.50px;height:15.75px;background:#a6bee0;"></div>
<div class="t " style="top:398.18px;left:94.20px;width:200px;text-align:right;transform-origin:100% 50%;color:#e03a3a;">53.25</div>
<div class="t " style="top:398.18px;left:140.00px;width:200px;text-align:right;transform-origin:100% 50%;">-26.07</div>
<div class="t " style="top:398.18px;left:186.20px;width:200px;text-align:right;transform-origin:100% 50%;">-1.16</div>
<div class="r" style="left:251.80px;top:413.75px;width:277.50px;height:15.75px;background:#a6bee0;"></div>
<div class="t " style="top:413.93px;left:94.20px;width:200px;text-align:right;transform-origin:100% 50%;color:#e03a3a;">49.35</div>
<div class="t " style="top:413.93px;left:140.00px;width:200px;text-align:right;transform-origin:100% 50%;">-24.13</div>
<div class="t " style="top:413.93px;left:186.20px;width:200px;text-align:right;transform-origin:100% 50%;">-1.15</div>
<div class="r" style="left:251.80px;top:429.50px;width:277.50px;height:15.75px;background:#a6bee0;"></div>
<div class="t " style="top:429.68px;left:94.20px;width:200px;text-align:right;transform-origin:100% 50%;color:#e03a3a;">45.65</div>
<div class="t " style="top:429.68px;left:140.00px;width:200px;text-align:right;transform-origin:100% 50%;">-22.32</div>
<div class="t " style="top:429.68px;left:186.20px;width:200px;text-align:right;transform-origin:100% 50%;">-1.14</div>
<div class="r" style="left:251.80px;top:445.25px;width:277.50px;height:15.75px;background:#a6bee0;"></div>
<div class="t " style="top:445.43px;left:94.20px;width:200px;text-align:right;transform-origin:100% 50%;color:#e03a3a;">42.35</div>
<div class="t " style="top:445.43px;left:140.00px;width:200px;text-align:right;transform-origin:100% 50%;">-20.67</div>
<div class="t " style="top:445.43px;left:186.20px;width:200px;text-align:right;transform-origin:100% 50%;">-1.13</div>
<div class="r" style="left:251.80px;top:461.00px;width:277.50px;height:15.75px;background:#a6bee0;"></div>
<div class="t " style="top:461.18px;left:94.20px;width:200px;text-align:right;transform-origin:100% 50%;color:#e03a3a;">39.30</div>
<div class="t " style="top:461.18px;left:140.00px;width:200px;text-align:right;transform-origin:100% 50%;">-19.15</div>
<div class="t " style="top:461.18px;left:186.20px;width:200px;text-align:right;transform-origin:100% 50%;">-1.11</div>
<div class="r" style="left:251.80px;top:476.75px;width:277.50px;height:15.75px;background:#c8e6ec;"></div>
<div class="t " style="top:476.93px;left:94.20px;width:200px;text-align:right;transform-origin:100% 50%;color:#e03a3a;">36.50</div>
<div class="t " style="top:476.93px;left:140.00px;width:200px;text-align:right;transform-origin:100% 50%;">-17.75</div>
<div class="t " style="top:476.93px;left:186.20px;width:200px;text-align:right;transform-origin:100% 50%;">-1.09</div>
<div class="r" style="left:251.80px;top:492.50px;width:277.50px;height:15.75px;background:#c8e6ec;"></div>
<div class="t " style="top:492.68px;left:94.20px;width:200px;text-align:right;transform-origin:100% 50%;color:#e03a3a;">33.90</div>
<div class="t " style="top:492.68px;left:140.00px;width:200px;text-align:right;transform-origin:100% 50%;">-16.45</div>
<div class="t " style="top:492.68px;left:186.20px;width:200px;text-align:right;transform-origin:100% 50%;">-1.07</div>
<div class="r" style="left:251.80px;top:508.25px;width:277.50px;height:15.75px;background:#fffaf0;"></div>
<div class="t " style="top:508.42px;left:94.20px;width:200px;text-align:right;transform-origin:100% 50%;color:#e03a3a;">31.50</div>
<div class="t " style="top:508.42px;left:140.00px;width:200px;text-align:right;transform-origin:100% 50%;">-15.26</div>
<div class="t " style="top:508.42px;left:186.20px;width:200px;text-align:right;transform-origin:100% 50%;">-1.04</div>
<div class="r" style="left:251.80px;top:524.00px;width:277.50px;height:15.75px;background:#c8e6ec;"></div>
<div class="t " style="top:524.17px;left:94.20px;width:200px;text-align:right;transform-origin:100% 50%;color:#e03a3a;">29.30</div>
<div class="t " style="top:524.17px;left:140.00px;width:200px;text-align:right;transform-origin:100% 50%;">-14.16</div>
<div class="t " style="top:524.17px;left:186.20px;width:200px;text-align:right;transform-origin:100% 50%;">-1.02</div>
<div class="r" style="left:251.80px;top:539.75px;width:277.50px;height:15.75px;background:#c8e6ec;"></div>
<div class="t " style="top:539.92px;left:94.20px;width:200px;text-align:right;transform-origin:100% 50%;color:#e03a3a;">27.30</div>
<div class="t " style="top:539.92px;left:140.00px;width:200px;text-align:right;transform-origin:100% 50%;">-13.15</div>
<div class="t " style="top:539.92px;left:186.20px;width:200px;text-align:right;transform-origin:100% 50%;">-0.99</div>
<div class="r" style="left:251.80px;top:555.50px;width:277.50px;height:15.75px;background:#c8e6ec;"></div>
<div class="t " style="top:555.67px;left:94.20px;width:200px;text-align:right;transform-origin:100% 50%;color:#e03a3a;">25.50</div>
<div class="t " style="top:555.67px;left:140.00px;width:200px;text-align:right;transform-origin:100% 50%;">-12.24</div>
<div class="t " style="top:555.67px;left:186.20px;width:200px;text-align:right;transform-origin:100% 50%;">-0.97</div>
<div class="r" style="left:251.80px;top:571.25px;width:277.50px;height:15.75px;background:#c8e6ec;"></div>
<div class="t " style="top:571.42px;left:94.20px;width:200px;text-align:right;transform-origin:100% 50%;color:#e03a3a;">23.80</div>
<div class="t " style="top:571.42px;left:140.00px;width:200px;text-align:right;transform-origin:100% 50%;">-11.38</div>
<div class="t " style="top:571.42px;left:186.20px;width:200px;text-align:right;transform-origin:100% 50%;">-0.94</div>
<div class="r" style="left:251.80px;top:587.00px;width:277.50px;height:2.60px;background:#c8e6ec;"></div>
<div class="r" style="left:251.30px;top:380.70px;width:1.00px;height:208.90px;background:#cbd0e3;opacity:.75;"></div>
<div class="r" style="left:296.20px;top:380.70px;width:1.00px;height:208.90px;background:#cbd0e3;opacity:.75;"></div>
<div class="r" style="left:342.00px;top:380.70px;width:1.00px;height:208.90px;background:#cbd0e3;opacity:.75;"></div>
<div class="r" style="left:388.20px;top:380.70px;width:1.00px;height:208.90px;background:#cbd0e3;opacity:.75;"></div>
<div class="r" style="left:434.00px;top:380.70px;width:1.00px;height:208.90px;background:#cbd0e3;opacity:.75;"></div>
<div class="r" style="left:479.50px;top:380.70px;width:1.00px;height:208.90px;background:#cbd0e3;opacity:.75;"></div>
<div class="r" style="left:528.80px;top:380.70px;width:1.00px;height:208.90px;background:#cbd0e3;opacity:.75;"></div>
<div class="r" style="left:251.80px;top:397.50px;width:277.50px;height:1.00px;background:#cbd0e3;opacity:.75;"></div>
<div class="r" style="left:251.80px;top:413.25px;width:277.50px;height:1.00px;background:#cbd0e3;opacity:.75;"></div>
<div class="r" style="left:251.80px;top:429.00px;width:277.50px;height:1.00px;background:#cbd0e3;opacity:.75;"></div>
<div class="r" style="left:251.80px;top:444.75px;width:277.50px;height:1.00px;background:#cbd0e3;opacity:.75;"></div>
<div class="r" style="left:251.80px;top:460.50px;width:277.50px;height:1.00px;background:#cbd0e3;opacity:.75;"></div>
<div class="r" style="left:251.80px;top:476.25px;width:277.50px;height:1.00px;background:#cbd0e3;opacity:.75;"></div>
<div class="r" style="left:251.80px;top:492.00px;width:277.50px;height:1.00px;background:#cbd0e3;opacity:.75;"></div>
<div class="r" style="left:251.80px;top:507.75px;width:277.50px;height:1.00px;background:#cbd0e3;opacity:.75;"></div>
<div class="r" style="left:251.80px;top:523.50px;width:277.50px;height:1.00px;background:#cbd0e3;opacity:.75;"></div>
<div class="r" style="left:251.80px;top:539.25px;width:277.50px;height:1.00px;background:#cbd0e3;opacity:.75;"></div>
<div class="r" style="left:251.80px;top:555.00px;width:277.50px;height:1.00px;background:#cbd0e3;opacity:.75;"></div>
<div class="r" style="left:251.80px;top:570.75px;width:277.50px;height:1.00px;background:#cbd0e3;opacity:.75;"></div>
<div class="r" style="left:251.80px;top:586.50px;width:277.50px;height:1.00px;background:#cbd0e3;opacity:.75;"></div>
<div class="r" style="left:529.30px;top:380.70px;width:14.20px;height:17.30px;background:#f7f9fc;"></div>
<div class="r" style="left:528.80px;top:380.70px;width:1.00px;height:17.30px;background:#cbd0e3;"></div>
<div class="r" style="left:529.30px;top:398.00px;width:14.10px;height:191.60px;background:#cdd3e4;"></div><svg style="left:533.3px;top:403.0px" width="7" height="5"><path d="M0.8 4.1L3.5 1L6.2 4.1Z" fill="#5a6482"/></svg><svg style="left:533.3px;top:580.6px" width="7" height="5"><path d="M0.8 0.9H6.2L3.5 4Z" fill="#5a6482"/></svg><div class="r" style="left:532.10px;top:466.40px;width:8.80px;height:14.30px;background:#9aa5bb;"></div>
<div class="r" style="left:544.60px;top:398.00px;width:1.20px;height:12.00px;background:#9fd0e4;"></div>
<div class="r" style="left:0.00px;top:589.20px;width:247.50px;height:1.00px;background:#aab3ca;"></div>
<div class="r" style="left:251.00px;top:589.20px;width:293.00px;height:1.00px;background:#aab3ca;"></div>
<svg style="left:213.4px;top:593.2px" width="14" height="4" viewBox="0 0 14 4"><path d="M1 0.5L3 3.5M3 0.5L1 3.5M4.5 0.5L6.5 3.5M6.5 0.5L4.5 3.5M8 0.5L10 3.5M10 0.5L8 3.5M11.5 0.5L13.5 3.5M13.5 0.5L11.5 3.5" stroke="#aeb4c6" stroke-width="0.7"/></svg>
<div class="r" style="left:-40.00px;top:602.40px;width:141.00px;height:16.00px;background:#fff;border:1px solid #bdc5d9;box-sizing:border-box;"></div><div class="t " style="top:602.70px;left:-25.00px;transform-origin:0 50%;">Combined</div><svg style="left:90.5px;top:608.4px" width="7" height="5"><path d="M1.1 0.9H5.9L3.5 3.7Z" fill="#525b7a"/></svg>
<div class="r" style="left:108.90px;top:602.40px;width:67.40px;height:16.00px;background:#fff;border:1px solid #bdc5d9;box-sizing:border-box;"></div><div class="t " style="top:602.70px;left:112.30px;transform-origin:0 50%;">Auto</div><svg style="left:165.8px;top:608.4px" width="7" height="5"><path d="M1.1 0.9H5.9L3.5 3.7Z" fill="#525b7a"/></svg>
<div class="r" style="left:427.40px;top:605.60px;width:8.40px;height:8.20px;background:#fff;border:1px solid #c5cbdc;box-sizing:border-box;"></div>
<div class="t " style="top:602.40px;left:439.80px;transform-origin:0 50%;transform:scaleX(0.949);">Ignore Today's Trades</div>
<div class="r" style="left:-4.80px;top:622.40px;width:549.10px;height:16.90px;background:#f7f9fc;"></div>
<div class="t " style="top:622.05px;left:-80.10px;width:200px;text-align:center;color:#3a4056;">Cost</div>
<div class="t " style="top:622.05px;left:-30.75px;width:200px;text-align:center;color:#3a4056;">Curr Cost</div>
<div class="t " style="top:622.05px;left:18.65px;width:200px;text-align:center;color:#3a4056;">Commi...</div>
<div class="t " style="top:622.05px;left:67.90px;width:200px;text-align:center;color:#3a4056;">PnL</div>
<div class="t " style="top:622.05px;left:117.00px;width:200px;text-align:center;color:#3a4056;">PnL%</div>
<div class="t " style="top:622.05px;left:165.90px;width:200px;text-align:center;color:#3a4056;">Delta</div>
<div class="t " style="top:622.05px;left:214.85px;width:200px;text-align:center;color:#3a4056;">Gamma</div>
<div class="t " style="top:622.05px;left:264.10px;width:200px;text-align:center;color:#3a4056;">Theta</div>
<div class="t " style="top:622.05px;left:313.60px;width:200px;text-align:center;color:#3a4056;">Vega</div>
<div class="t " style="top:622.05px;left:363.15px;width:200px;text-align:center;color:#3a4056;">T/D</div>
<div class="t " style="top:622.05px;left:416.05px;width:200px;text-align:center;color:#3a4056;">Plot</div>
<div class="r" style="left:-4.80px;top:639.30px;width:549.10px;height:15.90px;background:#fff;"></div>
<div class="t " style="top:639.55px;left:-157.90px;width:200px;text-align:right;transform-origin:100% 50%;">38,912....</div>
<div class="t " style="top:639.55px;left:-108.60px;width:200px;text-align:right;transform-origin:100% 50%;">-33,630...</div>
<div class="t " style="top:639.55px;left:-59.10px;width:200px;text-align:right;transform-origin:100% 50%;">105.70</div>
<div class="t " style="top:639.55px;left:-10.10px;width:200px;text-align:right;transform-origin:100% 50%;"><span style="color:#2f9a3c">5,282.04</span></div>
<div class="t " style="top:639.55px;left:39.10px;width:200px;text-align:right;transform-origin:100% 50%;"><span style="color:#2f9a3c">10.56%</span></div>
<div class="t " style="top:639.55px;left:87.70px;width:200px;text-align:right;transform-origin:100% 50%;">7.98</div>
<div class="t " style="top:639.55px;left:137.00px;width:200px;text-align:right;transform-origin:100% 50%;">-0.11</div>
<div class="t " style="top:639.55px;left:186.20px;width:200px;text-align:right;transform-origin:100% 50%;">159.10</div>
<div class="t " style="top:639.55px;left:236.00px;width:200px;text-align:right;transform-origin:100% 50%;">-225.99</div>
<div class="t " style="top:639.55px;left:285.30px;width:200px;text-align:right;transform-origin:100% 50%;">19.9</div>
<div class="r" style="left:-4.80px;top:655.20px;width:549.10px;height:15.90px;background:#fff;"></div>
<div class="t " style="top:655.45px;left:-157.90px;width:200px;text-align:right;transform-origin:100% 50%;">40,948....</div>
<div class="t " style="top:655.45px;left:-108.60px;width:200px;text-align:right;transform-origin:100% 50%;">-35,670...</div>
<div class="t " style="top:655.45px;left:-59.10px;width:200px;text-align:right;transform-origin:100% 50%;">110.44</div>
<div class="t " style="top:655.45px;left:-10.10px;width:200px;text-align:right;transform-origin:100% 50%;"><span style="color:#2f9a3c">5,277.30</span></div>
<div class="t " style="top:655.45px;left:39.10px;width:200px;text-align:right;transform-origin:100% 50%;"><span style="color:#2f9a3c">5.30%</span></div>
<div class="t " style="top:655.45px;left:87.70px;width:200px;text-align:right;transform-origin:100% 50%;">12.60</div>
<div class="t " style="top:655.45px;left:137.00px;width:200px;text-align:right;transform-origin:100% 50%;">-0.05</div>
<div class="t " style="top:655.45px;left:186.20px;width:200px;text-align:right;transform-origin:100% 50%;">97.93</div>
<div class="t " style="top:655.45px;left:236.00px;width:200px;text-align:right;transform-origin:100% 50%;">-469.74</div>
<div class="t " style="top:655.45px;left:285.30px;width:200px;text-align:right;transform-origin:100% 50%;">7.8</div>
<div class="r" style="left:-5.30px;top:622.40px;width:1.00px;height:48.70px;background:#cbd0e3;opacity:.75;"></div>
<div class="r" style="left:44.10px;top:622.40px;width:1.00px;height:48.70px;background:#cbd0e3;opacity:.75;"></div>
<div class="r" style="left:93.40px;top:622.40px;width:1.00px;height:48.70px;background:#cbd0e3;opacity:.75;"></div>
<div class="r" style="left:142.90px;top:622.40px;width:1.00px;height:48.70px;background:#cbd0e3;opacity:.75;"></div>
<div class="r" style="left:191.90px;top:622.40px;width:1.00px;height:48.70px;background:#cbd0e3;opacity:.75;"></div>
<div class="r" style="left:241.10px;top:622.40px;width:1.00px;height:48.70px;background:#cbd0e3;opacity:.75;"></div>
<div class="r" style="left:289.70px;top:622.40px;width:1.00px;height:48.70px;background:#cbd0e3;opacity:.75;"></div>
<div class="r" style="left:339.00px;top:622.40px;width:1.00px;height:48.70px;background:#cbd0e3;opacity:.75;"></div>
<div class="r" style="left:388.20px;top:622.40px;width:1.00px;height:48.70px;background:#cbd0e3;opacity:.75;"></div>
<div class="r" style="left:438.00px;top:622.40px;width:1.00px;height:48.70px;background:#cbd0e3;opacity:.75;"></div>
<div class="r" style="left:487.30px;top:622.40px;width:1.00px;height:48.70px;background:#cbd0e3;opacity:.75;"></div>
<div class="r" style="left:543.80px;top:622.40px;width:1.00px;height:48.70px;background:#cbd0e3;opacity:.75;"></div>
<div class="r" style="left:-4.80px;top:638.80px;width:549.10px;height:1.00px;background:#cbd0e3;opacity:.75;"></div>
<div class="r" style="left:-4.80px;top:654.70px;width:549.10px;height:1.00px;background:#cbd0e3;opacity:.75;"></div>
<div class="r" style="left:-4.80px;top:670.60px;width:549.10px;height:1.00px;background:#cbd0e3;opacity:.75;"></div>
<div class="r" style="left:-1.00px;top:621.90px;width:545.80px;height:49.80px;background:transparent;border:1px solid #c3c9da;box-sizing:border-box;"></div>
<svg style="left:511.8px;top:642.9px" width="9" height="9" viewBox="0 0 9 9"><rect x="0.5" y="0.5" width="8" height="8" fill="#fff" stroke="#aab2c6"/><path d="M2 4.5L3.8 6.5L7 2.5" stroke="#5a6076" stroke-width="1" fill="none"/></svg>
<svg style="left:511.8px;top:658.8px" width="9" height="9" viewBox="0 0 9 9"><rect x="0.5" y="0.5" width="8" height="8" fill="#fff" stroke="#aab2c6"/><path d="M2 4.5L3.8 6.5L7 2.5" stroke="#5a6076" stroke-width="1" fill="none"/></svg>
<div class="r" style="left:0.00px;top:672.30px;width:556.00px;height:1.80px;background:#929cb6;"></div>
<div class="r" style="left:555.50px;top:136.00px;width:524.50px;height:536.00px;background:#fff;"></div>
<div class="r" style="left:555.00px;top:137.00px;width:1.00px;height:537.00px;background:#b4bccf;"></div>
<div class="r" style="left:556.00px;top:136.00px;width:524.00px;height:45.30px;background:#d6dbe9;"></div>
<div class="r" style="left:555.50px;top:158.60px;width:524.50px;height:1.00px;background:#b0b8cd;"></div>
<div class="r" style="left:556.00px;top:137.10px;width:63.80px;height:22.50px;background:#d9deeb;border:1px solid #b0b8cd;border-bottom:none;border-left:none;box-sizing:border-box;"></div>
<div class="t " style="top:140.20px;left:487.65px;width:200px;text-align:center;transform:scaleX(0.863);">Risk Chart</div>
<div class="r" style="left:618.80px;top:137.10px;width:67.70px;height:22.10px;background:#cdd3e4;border:1px solid #b0b8cd;box-sizing:border-box;"></div>
<div class="t " style="top:140.20px;left:553.15px;width:200px;text-align:center;transform:scaleX(0.871);">Price Chart</div>
<div class="r" style="left:685.50px;top:137.10px;width:106.30px;height:22.10px;background:#cdd3e4;border:1px solid #b0b8cd;box-sizing:border-box;"></div>
<div class="t " style="top:140.20px;left:639.15px;width:200px;text-align:center;transform:scaleX(0.903);">Movement Analysis</div>
<div class="r" style="left:790.80px;top:137.10px;width:54.50px;height:22.10px;background:#cdd3e4;border:1px solid #b0b8cd;box-sizing:border-box;"></div>
<div class="t " style="top:140.20px;left:718.55px;width:200px;text-align:center;transform:scaleX(0.905);">Volatility</div>
<div class="r" style="left:844.30px;top:137.10px;width:134.70px;height:22.10px;background:#cdd3e4;border:1px solid #b0b8cd;box-sizing:border-box;"></div>
<div class="t " style="top:140.20px;left:812.15px;width:200px;text-align:center;transform:scaleX(0.896);">Statistics &amp; Fundamentals</div>
<div class="r" style="left:556.00px;top:159.60px;width:524.00px;height:21.60px;background:#d9deeb;"></div>
<div class="t " style="top:162.30px;left:560.60px;transform-origin:0 50%;transform:scaleX(0.911);">Vol Adjust</div>
<div class="r" style="left:609.40px;top:162.10px;width:44.90px;height:15.80px;background:#fff;border:1px solid #c3cadc;box-sizing:border-box;"></div>
<div class="t " style="top:162.30px;left:437.60px;width:200px;text-align:right;transform-origin:100% 50%;">0</div>
<svg style="left:643.5px;top:164.5px" width="7" height="12"><path d="M1.2 4L3.5 1.5L5.8 4Z M1.2 8L3.5 10.5L5.8 8Z" fill="#566080"/></svg>
<div class="t " style="top:162.30px;left:984.60px;transform-origin:0 50%;transform:scaleX(0.871);">Projection</div>
<div class="r" style="left:1031.70px;top:162.20px;width:60.00px;height:15.70px;background:#fff;border:1px solid #c5cbdc;box-sizing:border-box;"></div>
<div class="t " style="top:162.30px;left:1034.20px;transform-origin:0 50%;transform:scaleX(0.936);">08/09/2025</div>
<svg style="left:548px;top:378px" width="4" height="14" viewBox="0 0 4 14"><path d="M0.5 1L3.5 3M3.5 1L0.5 3M0.5 4.5L3.5 6.5M3.5 4.5L0.5 6.5M0.5 8L3.5 10M3.5 8L0.5 10M0.5 11.5L3.5 13.5M3.5 11.5L0.5 13.5" stroke="#aeb4c6" stroke-width="0.7"/></svg>
<svg style="left:556px;top:181px;opacity:.999" width="524" height="492" viewBox="556 181 524 492" font-family="Liberation Sans, sans-serif" font-size="8.8">
<rect x="833.7" y="196.6" width="225.1" height="274.9" fill="#8fcddb"/>
<rect x="889.9" y="196.6" width="112.5" height="274.9" fill="#4f81bd"/>
<path d="M600.0999999999999 471.1H1080M600.0999999999999 446.1H1080M600.0999999999999 421.1H1080M600.0999999999999 371.1H1080M600.0999999999999 346.1H1080M600.0999999999999 321.1H1080M600.0999999999999 296.1H1080M600.0999999999999 271.1H1080M600.0999999999999 246.1H1080M600.0999999999999 221.1H1080M600.0999999999999 196.1H1080M624.8 193.3V473.9M694.2 193.3V473.9M763.6 193.3V473.9M833.1 193.3V473.9M902.5 193.3V473.9M971.9 193.3V473.9M1041.3 193.3V473.9" stroke="#d4d4d4" stroke-opacity=".8" stroke-width="1" fill="none"/>
<path d="M603.3 196.1V471.1" stroke="#d0d0d0" stroke-width="1"/>
<path d="M603.3 396.5H1080" stroke="#2a2a2a" stroke-width="1"/>
<text transform="translate(843.2 231) rotate(-90)" fill="#62a6cc" font-size="8.8">6400.45</text>
<text transform="translate(899.7 231) rotate(-90)" fill="#9dbbe2" font-size="8.8">6440.97</text>
<text transform="translate(1000.7 231) rotate(-90)" fill="#9dbbe2" font-size="8.8">6522.03</text>
<text transform="translate(1057.0 231) rotate(-90)" fill="#62a6cc" font-size="8.8">6562.56</text>
<path d="M603.3 459.0C605.6 456.4 612.6 448.4 617.3 443.4C622.0 438.5 626.6 433.8 631.3 429.3C636.0 424.7 640.6 420.5 645.3 416.3C650.0 412.1 654.6 408.2 659.3 404.3C664.0 400.4 668.6 396.7 673.3 393.1C678.0 389.5 682.6 386.0 687.3 382.6C692.0 379.2 696.6 376.0 701.3 372.7C706.0 369.5 710.6 366.4 715.3 363.3C720.0 360.3 724.6 357.3 729.3 354.4C734.0 351.4 738.6 348.6 743.3 345.8C748.0 343.0 752.6 340.3 757.3 337.6C762.0 334.9 766.6 332.3 771.3 329.7C776.0 327.1 780.6 324.6 785.3 322.1C790.0 319.7 794.6 317.3 799.3 314.9C804.0 312.6 808.6 310.3 813.3 308.1C818.0 305.9 822.6 303.7 827.3 301.6C832.0 299.6 836.6 297.5 841.3 295.6C846.0 293.6 850.6 291.8 855.3 290.0C860.0 288.2 864.6 286.4 869.3 284.8C874.0 283.1 878.6 281.6 883.3 280.1C888.0 278.6 892.6 277.2 897.3 275.9C902.0 274.6 906.6 273.4 911.3 272.2C916.0 271.1 920.6 270.0 925.3 269.1C930.0 268.1 934.6 267.2 939.3 266.4C944.0 265.6 948.6 264.9 953.3 264.3C958.0 263.6 962.6 263.1 967.3 262.6C972.0 262.0 976.6 261.6 981.3 261.2C986.0 260.9 990.6 260.6 995.3 260.3C1000.0 260.0 1004.6 259.8 1009.3 259.5C1014.0 259.3 1018.6 259.1 1023.3 258.9C1028.0 258.7 1032.6 258.5 1037.3 258.3C1042.0 258.0 1046.6 257.8 1051.3 257.5C1056.0 257.1 1060.6 256.7 1065.3 256.2C1070.0 255.7 1076.8 254.7 1079.3 254.4C1081.8 254.1 1079.9 254.3 1080.0 254.3" stroke="#84a4ee" stroke-width="1" fill="none"/>
<path d="M603.3 407.8C605.6 406.5 612.6 402.5 617.3 399.8C622.0 397.2 626.6 394.6 631.3 392.0C636.0 389.4 640.6 386.8 645.3 384.3C650.0 381.8 654.6 379.3 659.3 376.9C664.0 374.4 668.6 372.0 673.3 369.6C678.0 367.2 682.6 364.8 687.3 362.5C692.0 360.1 696.6 357.8 701.3 355.6C706.0 353.3 710.6 351.1 715.3 348.9C720.0 346.7 724.6 344.5 729.3 342.4C734.0 340.3 738.6 338.2 743.3 336.1C748.0 334.1 752.6 332.1 757.3 330.1C762.0 328.1 766.6 326.1 771.3 324.2C776.0 322.3 780.6 320.4 785.3 318.6C790.0 316.8 794.6 315.0 799.3 313.2C804.0 311.4 808.6 309.7 813.3 308.0C818.0 306.3 822.6 304.6 827.3 303.0C832.0 301.3 836.6 299.7 841.3 298.2C846.0 296.6 850.6 295.1 855.3 293.6C860.0 292.1 864.6 290.6 869.3 289.2C874.0 287.8 878.6 286.4 883.3 285.0C888.0 283.7 892.6 282.3 897.3 281.0C902.0 279.7 906.6 278.4 911.3 277.2C916.0 275.9 920.6 274.7 925.3 273.5C930.0 272.4 934.6 271.2 939.3 270.1C944.0 268.9 948.6 267.8 953.3 266.7C958.0 265.7 962.6 264.6 967.3 263.6C972.0 262.5 976.6 261.5 981.3 260.5C986.0 259.5 990.6 258.5 995.3 257.6C1000.0 256.6 1004.6 255.7 1009.3 254.8C1014.0 253.9 1018.6 253.0 1023.3 252.1C1028.0 251.2 1032.6 250.3 1037.3 249.5C1042.0 248.6 1046.6 247.8 1051.3 246.9C1056.0 246.1 1060.6 245.2 1065.3 244.4C1070.0 243.6 1076.8 242.4 1079.3 242.0C1081.8 241.5 1079.9 241.9 1080.0 241.8" stroke="#5cc45c" stroke-width="1" fill="none"/>
<path d="M603.3 413.2C605.6 410.6 612.6 402.6 617.3 397.5C622.0 392.3 626.6 387.4 631.3 382.5C636.0 377.6 640.6 372.9 645.3 368.3C650.0 363.8 654.6 359.3 659.3 355.0C664.0 350.7 668.6 346.5 673.3 342.5C678.0 338.5 682.6 334.6 687.3 330.8C692.0 327.1 696.6 323.4 701.3 320.0C706.0 316.5 710.6 313.2 715.3 309.9C720.0 306.7 724.6 303.7 729.3 300.7C734.0 297.8 738.6 295.0 743.3 292.3C748.0 289.6 752.6 287.1 757.3 284.7C762.0 282.2 766.6 279.9 771.3 277.8C776.0 275.6 780.6 273.5 785.3 271.6C790.0 269.7 794.6 267.8 799.3 266.1C804.0 264.4 808.6 262.8 813.3 261.3C818.0 259.8 822.6 258.4 827.3 257.1C832.0 255.9 836.6 254.7 841.3 253.6C846.0 252.5 850.6 251.5 855.3 250.5C860.0 249.6 864.6 248.8 869.3 248.0C874.0 247.3 878.6 246.6 883.3 246.0C888.0 245.4 892.6 244.9 897.3 244.5C902.0 244.0 906.6 243.6 911.3 243.3C916.0 243.0 920.6 242.7 925.3 242.5C930.0 242.3 934.6 242.1 939.3 242.0C944.0 241.9 948.6 241.8 953.3 241.8C958.0 241.8 962.6 241.8 967.3 241.8C972.0 241.9 976.6 242.0 981.3 242.1C986.0 242.2 990.6 242.4 995.3 242.5C1000.0 242.7 1004.6 242.9 1009.3 243.1C1014.0 243.3 1018.6 243.5 1023.3 243.8C1028.0 244.0 1032.6 244.3 1037.3 244.5C1042.0 244.8 1046.6 245.1 1051.3 245.4C1056.0 245.6 1060.6 245.9 1065.3 246.2C1070.0 246.5 1076.8 246.9 1079.3 247.1C1081.8 247.2 1079.9 247.1 1080.0 247.1" stroke="#f06868" stroke-width="1.1" fill="none"/>
<path d="M603.3 384.9C605.6 383.5 612.6 379.4 617.3 376.7C622.0 374.0 626.6 371.3 631.3 368.7C636.0 366.1 640.6 363.6 645.3 361.1C650.0 358.5 654.6 356.1 659.3 353.6C664.0 351.2 668.6 348.8 673.3 346.4C678.0 344.1 682.6 341.8 687.3 339.5C692.0 337.2 696.6 335.0 701.3 332.8C706.0 330.6 710.6 328.5 715.3 326.4C720.0 324.3 724.6 322.2 729.3 320.2C734.0 318.1 738.6 316.2 743.3 314.2C748.0 312.3 752.6 310.4 757.3 308.5C762.0 306.7 766.6 304.8 771.3 303.0C776.0 301.3 780.6 299.5 785.3 297.8C790.0 296.1 794.6 294.4 799.3 292.8C804.0 291.2 808.6 289.6 813.3 288.0C818.0 286.5 822.6 285.0 827.3 283.5C832.0 282.0 836.6 280.6 841.3 279.2C846.0 277.8 850.6 276.4 855.3 275.0C860.0 273.7 864.6 272.4 869.3 271.1C874.0 269.9 878.6 268.6 883.3 267.4C888.0 266.2 892.6 265.0 897.3 263.9C902.0 262.7 906.6 261.6 911.3 260.5C916.0 259.5 920.6 258.4 925.3 257.4C930.0 256.3 934.6 255.4 939.3 254.4C944.0 253.4 948.6 252.5 953.3 251.5C958.0 250.6 962.6 249.7 967.3 248.8C972.0 248.0 976.6 247.1 981.3 246.3C986.0 245.4 990.6 244.6 995.3 243.8C1000.0 243.1 1004.6 242.3 1009.3 241.5C1014.0 240.8 1018.6 240.0 1023.3 239.3C1028.0 238.6 1032.6 237.9 1037.3 237.2C1042.0 236.5 1046.6 235.8 1051.3 235.2C1056.0 234.5 1060.6 233.8 1065.3 233.2C1070.0 232.5 1076.8 231.6 1079.3 231.3C1081.8 230.9 1079.9 231.2 1080.0 231.2" stroke="#f06868" stroke-width="1.1" fill="none"/>
<path d="M603.3 364.4L692.2 211.1L1080 246.2" stroke="#3636c8" stroke-width="1.4" fill="none" stroke-linejoin="round"/>
<path d="M603.3 364.4C605.6 363.0 612.6 358.9 617.3 356.1C622.0 353.4 626.6 350.8 631.3 348.1C636.0 345.5 640.6 342.9 645.3 340.4C650.0 337.9 654.6 335.4 659.3 332.9C664.0 330.5 668.6 328.1 673.3 325.7C678.0 323.4 682.6 321.1 687.3 318.8C692.0 316.6 696.6 314.4 701.3 312.2C706.0 310.0 710.6 307.9 715.3 305.9C720.0 303.8 724.6 301.8 729.3 299.8C734.0 297.8 738.6 295.9 743.3 294.0C748.0 292.1 752.6 290.3 757.3 288.5C762.0 286.7 766.6 284.9 771.3 283.2C776.0 281.5 780.6 279.9 785.3 278.3C790.0 276.7 794.6 275.1 799.3 273.6C804.0 272.0 808.6 270.6 813.3 269.1C818.0 267.7 822.6 266.3 827.3 264.9C832.0 263.6 836.6 262.3 841.3 261.0C846.0 259.7 850.6 258.5 855.3 257.3C860.0 256.1 864.6 254.9 869.3 253.8C874.0 252.7 878.6 251.6 883.3 250.6C888.0 249.5 892.6 248.5 897.3 247.5C902.0 246.6 906.6 245.6 911.3 244.7C916.0 243.8 920.6 242.9 925.3 242.0C930.0 241.2 934.6 240.4 939.3 239.6C944.0 238.8 948.6 238.0 953.3 237.3C958.0 236.5 962.6 235.8 967.3 235.1C972.0 234.4 976.6 233.7 981.3 233.1C986.0 232.4 990.6 231.8 995.3 231.2C1000.0 230.6 1004.6 230.0 1009.3 229.4C1014.0 228.8 1018.6 228.2 1023.3 227.6C1028.0 227.1 1032.6 226.5 1037.3 226.0C1042.0 225.4 1046.6 224.9 1051.3 224.4C1056.0 223.9 1060.6 223.3 1065.3 222.8C1070.0 222.3 1076.8 221.5 1079.3 221.2C1081.8 221.0 1079.9 221.2 1080.0 221.1" stroke="#0a7a0a" stroke-width="1.5" fill="none"/>
<rect x="960" y="260.5" width="13" height="7" rx="1.5" fill="#c9a48c" opacity=".85"/>
<circle cx="963.3" cy="264.4" r="2.9" fill="#48c0cc" stroke="#2a3a5a" stroke-width="0.9"/>
<text x="597.8" y="475.3" text-anchor="end" fill="#222">-6%</text>
<text x="597.8" y="450.3" text-anchor="end" fill="#222">-4%</text>
<text x="597.8" y="425.3" text-anchor="end" fill="#222">-2%</text>
<text x="597.8" y="400.3" text-anchor="end" fill="#222">0%</text>
<text x="597.8" y="375.3" text-anchor="end" fill="#222">2%</text>
<text x="597.8" y="350.3" text-anchor="end" fill="#222">4%</text>
<text x="597.8" y="325.3" text-anchor="end" fill="#222">6%</text>
<text x="597.8" y="300.3" text-anchor="end" fill="#222">8%</text>
<text x="597.8" y="275.3" text-anchor="end" fill="#222">10%</text>
<text x="597.8" y="250.3" text-anchor="end" fill="#222">12%</text>
<text x="597.8" y="225.3" text-anchor="end" fill="#222">14%</text>
<text x="597.8" y="200.3" text-anchor="end" fill="#222">16%</text>
<text x="624.8" y="192.2" text-anchor="middle" fill="#222">-3.6%</text>
<text x="624.8" y="484.4" text-anchor="middle" fill="#222">6250</text>
<text x="694.2" y="192.2" text-anchor="middle" fill="#222">-2.8%</text>
<text x="694.2" y="484.4" text-anchor="middle" fill="#222">6300</text>
<text x="763.6" y="192.2" text-anchor="middle" fill="#222">-2.0%</text>
<text x="763.6" y="484.4" text-anchor="middle" fill="#222">6350</text>
<text x="833.1" y="192.2" text-anchor="middle" fill="#222">-1.3%</text>
<text x="833.1" y="484.4" text-anchor="middle" fill="#222">6400</text>
<text x="902.5" y="192.2" text-anchor="middle" fill="#222">-0.5%</text>
<text x="902.5" y="484.4" text-anchor="middle" fill="#222">6450</text>
<text x="971.9" y="192.2" text-anchor="middle" fill="#222">0.3%</text>
<text x="1041.3" y="192.2" text-anchor="middle" fill="#222">1.1%</text>
<text x="1041.3" y="484.4" text-anchor="middle" fill="#222">6550</text>
<rect x="951.1" y="182.3" width="24.4" height="9.6" fill="#fff" stroke="#44506a" stroke-width="0.8"/>
<text x="963.3" y="190.4" text-anchor="middle" fill="#222">0.2%</text>
<rect x="561.3" y="258.6" width="38.6" height="10.4" fill="#008a00"/>
<text x="598" y="267.2" text-anchor="end" fill="#fff">11%</text>
<rect x="607.5" y="201.6" width="139.1" height="138" rx="4" fill="#e8edf6" fill-opacity=".86" stroke="#8a96b0" stroke-width="0.9"/>
<rect x="614" y="208.1" width="2.8" height="9.8" fill="#a8e0a0"/>
<text x="617.5" y="216.6" fill="#555">7,806.79 Realized PnL</text>
<rect x="614" y="219.7" width="2.8" height="9.8" fill="#56b852"/>
<text x="617.3" y="228.2" fill="#555">-1</text>
<text x="627.6" y="228.2" fill="#f06868">19sep. 6825 Call Δ</text>
<text x="736.8" y="228.2" text-anchor="end" fill="#f06868">0.57</text>
<rect x="614" y="231.3" width="2.8" height="9.8" fill="#56b852"/>
<text x="617.3" y="239.8" fill="#555">+1</text>
<text x="630.4" y="239.8" fill="#5a68f0">19sep. 6925 Call Δ</text>
<text x="739.4" y="239.8" text-anchor="end" fill="#5a68f0">0.29</text>
<rect x="614" y="242.9" width="2.8" height="9.8" fill="#56b852"/>
<text x="617.3" y="251.4" fill="#555">+1</text>
<text x="630.4" y="251.4" fill="#5a68f0">19sep. 6300 Put Δ</text>
<text x="738.4" y="251.4" text-anchor="end" fill="#5a68f0">-12.88</text>
<rect x="614" y="254.5" width="2.8" height="9.8" fill="#56b852"/>
<text x="617.3" y="263.0" fill="#555">-1</text>
<text x="627.6" y="263.0" fill="#f06868">17oct. 6175 Put Δ</text>
<text x="732.6" y="263.0" text-anchor="end" fill="#f06868">-16.27</text>
<rect x="614" y="266.1" width="2.8" height="9.8" fill="#56b852"/>
<text x="617.3" y="274.6" fill="#555">+1</text>
<text x="630.4" y="274.6" fill="#5a68f0">17oct. 6900 Call Δ</text>
<text x="737.4" y="274.6" text-anchor="end" fill="#5a68f0">3.89</text>
<rect x="614" y="277.7" width="2.8" height="9.8" fill="#56b852"/>
<text x="617.3" y="286.2" fill="#555">-1</text>
<text x="627.6" y="286.2" fill="#f06868">17oct. 6950 Call Δ</text>
<text x="734.8" y="286.2" text-anchor="end" fill="#f06868">2.57</text>
<rect x="614" y="289.3" width="2.8" height="9.8" fill="#8a9cf0"/>
<text x="617.3" y="297.8" fill="#555">-5</text>
<text x="627.6" y="297.8" fill="#f06868">SPX Stock</text>
<rect x="614" y="300.9" width="2.8" height="9.8" fill="#8a9cf0"/>
<text x="617.3" y="309.4" fill="#555">+1</text>
<text x="630.4" y="309.4" fill="#5a68f0">19sep. 6825 Call Δ</text>
<text x="739.4" y="309.4" text-anchor="end" fill="#5a68f0">0.57</text>
<rect x="614" y="312.5" width="2.8" height="9.8" fill="#8a9cf0"/>
<text x="617.3" y="321.0" fill="#555">-1</text>
<text x="627.6" y="321.0" fill="#f06868">19sep. 6925 Call Δ</text>
<text x="736.8" y="321.0" text-anchor="end" fill="#f06868">0.29</text>
<rect x="614" y="324.1" width="2.8" height="9.8" fill="#8a9cf0"/>
<text x="617.3" y="332.6" fill="#555">-1</text>
<text x="627.6" y="332.6" fill="#f06868">19sep. 6300 Put Δ</text>
<text x="735.4" y="332.6" text-anchor="end" fill="#f06868">-12.88</text>
<rect x="607.4" y="421.4" width="91.6" height="45.8" rx="3.5" fill="#e8edf6" fill-opacity=".88" stroke="#9aa6bc" stroke-width="0.9"/>
<text x="614.6" y="436.9" fill="#5aa65a">19/09/2025 (0)</text>
<text x="614.6" y="448.4" fill="#f07070">14/09/2025 (5) T+6</text>
<text x="614.6" y="459.9" fill="#78d478">08/09/2025 (11) T+0</text>
<rect x="559.8" y="490.5" width="540" height="156.7" rx="3.5" fill="#ebf0f8" stroke="#858fa8" stroke-width="0.9"/>
<path d="M604 513.2L604 513.2L659.4 513.2L659.4 511.2L728.8 511.2L728.8 509.2L798.2 509.2L798.2 507.8L867.7 507.8L867.7 506.9L937 506.9L937 505.4L1006.4 505.4L1006.4 504.5L1076 504.5L1076 504L1090 504L1090 513.2Z" fill="#5b75f0" stroke="#4a5068" stroke-width="0.7"/><path d="M659.4 513.2V511.2M728.8 513.2V509.2M798.2 513.2V507.8M867.7 513.2V506.9M937 513.2V505.4M1006.4 513.2V504.5M1076 513.2V504" stroke="#4a5068" stroke-width="0.7" fill="none"/>
<path d="M604 549.3L604 540.6L659.4 540.6L659.4 542.4L728.8 542.4L728.8 543.5L798.2 543.5L798.2 545.2L867.7 545.2L867.7 545.8L937 545.8L937 546.5L1006.4 546.5L1006.4 547.3L1076 547.3L1076 547.8L1090 547.8L1090 549.3Z" fill="#5b75f0" stroke="#4a5068" stroke-width="0.7"/><path d="M659.4 549.3V540.6M728.8 549.3V542.4M798.2 549.3V543.5M867.7 549.3V545.2M937 549.3V545.8M1006.4 549.3V546.5M1076 549.3V547.3" stroke="#4a5068" stroke-width="0.7" fill="none"/>
<path d="M604 577L604 585.4L659.4 585.4L659.4 585.4L728.8 585.4L728.8 584L798.2 584L798.2 583L867.7 583L867.7 582.2L937 582.2L937 581L1006.4 581L1006.4 580.2L1076 580.2L1076 579.5L1090 579.5L1090 577Z" fill="#f0787c" stroke="#4a5068" stroke-width="0.7"/><path d="M659.4 577V585.4M728.8 577V585.4M798.2 577V584M867.7 577V583M937 577V582.2M1006.4 577V581M1076 577V580.2" stroke="#4a5068" stroke-width="0.7" fill="none"/>
<path d="M604 604.2L604 595.5L659.4 595.5L659.4 596.4L728.8 596.4L728.8 596.4L798.2 596.4L798.2 597L867.7 597L867.7 597.5L937 597.5L937 599L1006.4 599L1006.4 600L1076 600L1076 601L1090 601L1090 604.2Z" fill="#5b75f0" stroke="#4a5068" stroke-width="0.7"/><path d="M659.4 604.2V595.5M728.8 604.2V596.4M798.2 604.2V596.4M867.7 604.2V597M937 604.2V597.5M1006.4 604.2V599M1076 604.2V600" stroke="#4a5068" stroke-width="0.7" fill="none"/>
<path d="M604 631.6L604 640.3L659.4 640.3L659.4 639.4L728.8 639.4L728.8 638.8L798.2 638.8L798.2 638L867.7 638L867.7 637.4L937 637.4L937 636.2L1006.4 636.2L1006.4 635.4L1076 635.4L1076 634.5L1090 634.5L1090 631.6Z" fill="#f0787c" stroke="#4a5068" stroke-width="0.7"/><path d="M659.4 631.6V640.3M728.8 631.6V639.4M798.2 631.6V638.8M867.7 631.6V638M937 631.6V637.4M1006.4 631.6V636.2M1076 631.6V635.4" stroke="#4a5068" stroke-width="0.7" fill="none"/>
<text x="581" y="517.2" text-anchor="middle" fill="#666">PnL</text>
<text x="581" y="553.4" text-anchor="middle" fill="#666">Delta</text>
<text x="581" y="580.8" text-anchor="middle" fill="#666">Gamma</text>
<text x="581" y="607.9" text-anchor="middle" fill="#666">Theta</text>
<text x="581" y="635.4" text-anchor="middle" fill="#666">Vega</text>
<text x="624.8" y="521.7" text-anchor="middle" fill="#6a78f0">32</text>
<text x="694.2" y="521.7" text-anchor="middle" fill="#6a78f0">1528</text>
<text x="763.6" y="521.7" text-anchor="middle" fill="#6a78f0">2784</text>
<text x="833.1" y="521.7" text-anchor="middle" fill="#6a78f0">3821</text>
<text x="902.5" y="521.7" text-anchor="middle" fill="#6a78f0">4666</text>
<text x="971.9" y="521.7" text-anchor="middle" fill="#6a78f0">5250</text>
<text x="1041.3" y="521.7" text-anchor="middle" fill="#6a78f0">5906</text>
<text x="624.8" y="529.4" text-anchor="middle" fill="#6a78f0">0%</text>
<text x="694.2" y="529.4" text-anchor="middle" fill="#6a78f0">3%</text>
<text x="763.6" y="529.4" text-anchor="middle" fill="#6a78f0">6%</text>
<text x="833.1" y="529.4" text-anchor="middle" fill="#6a78f0">8%</text>
<text x="902.5" y="529.4" text-anchor="middle" fill="#6a78f0">9%</text>
<text x="971.9" y="529.4" text-anchor="middle" fill="#6a78f0">11%</text>
<text x="1041.3" y="529.4" text-anchor="middle" fill="#6a78f0">12%</text>
<text x="624.8" y="558.2" text-anchor="middle" fill="#6a78f0">32.48</text>
<text x="694.2" y="558.2" text-anchor="middle" fill="#6a78f0">27.45</text>
<text x="763.6" y="558.2" text-anchor="middle" fill="#6a78f0">22.84</text>
<text x="833.1" y="558.2" text-anchor="middle" fill="#6a78f0">18.72</text>
<text x="902.5" y="558.2" text-anchor="middle" fill="#6a78f0">15.19</text>
<text x="971.9" y="558.2" text-anchor="middle" fill="#6a78f0">12.23</text>
<text x="1041.3" y="558.2" text-anchor="middle" fill="#6a78f0">10.07</text>
<text x="624.8" y="576.2" text-anchor="middle" fill="#f07070">-0.10</text>
<text x="694.2" y="576.2" text-anchor="middle" fill="#f07070">-0.10</text>
<text x="763.6" y="576.2" text-anchor="middle" fill="#f07070">-0.09</text>
<text x="833.1" y="576.2" text-anchor="middle" fill="#f07070">-0.08</text>
<text x="902.5" y="576.2" text-anchor="middle" fill="#f07070">-0.06</text>
<text x="971.9" y="576.2" text-anchor="middle" fill="#f07070">-0.05</text>
<text x="1041.3" y="576.2" text-anchor="middle" fill="#f07070">-0.04</text>
<text x="624.8" y="613.2" text-anchor="middle" fill="#6a78f0">145.19</text>
<text x="694.2" y="613.2" text-anchor="middle" fill="#6a78f0">140.79</text>
<text x="763.6" y="613.2" text-anchor="middle" fill="#6a78f0">133.23</text>
<text x="833.1" y="613.2" text-anchor="middle" fill="#6a78f0">122.92</text>
<text x="902.5" y="613.2" text-anchor="middle" fill="#6a78f0">110.37</text>
<text x="971.9" y="613.2" text-anchor="middle" fill="#6a78f0">96.22</text>
<text x="1041.3" y="613.2" text-anchor="middle" fill="#6a78f0">81.22</text>
<text x="624.8" y="631.3" text-anchor="middle" fill="#f07070">-770.24</text>
<text x="694.2" y="631.3" text-anchor="middle" fill="#f07070">-731.99</text>
<text x="763.6" y="631.3" text-anchor="middle" fill="#f07070">-679.82</text>
<text x="833.1" y="631.3" text-anchor="middle" fill="#f07070">-615.45</text>
<text x="902.5" y="631.3" text-anchor="middle" fill="#f07070">-541.16</text>
<text x="971.9" y="631.3" text-anchor="middle" fill="#f07070">-463.04</text>
<text x="1041.3" y="631.3" text-anchor="middle" fill="#f07070">-376.33</text>
<rect x="942.4" y="475.8" width="41.8" height="171.1" rx="3.5" fill="#e6ecf7" fill-opacity=".9" stroke="#7c869f" stroke-width="0.9"/>
<text x="963.3" y="484.4" text-anchor="middle" fill="#222">6494.16</text>
<text x="963.3" y="512.8" text-anchor="middle" fill="#2a34e0" stroke="#2a34e0" stroke-width="0.25">5,277</text>
<text x="963.3" y="525.9" text-anchor="middle" fill="#2a34e0" stroke="#2a34e0" stroke-width="0.25">10.6%</text>
<text x="963.3" y="553.4" text-anchor="middle" fill="#2a34e0" stroke="#2a34e0" stroke-width="0.25">12.60</text>
<text x="963.3" y="580.8" text-anchor="middle" fill="#e02020" stroke="#e02020" stroke-width="0.25">-0.05</text>
<text x="963.3" y="607.9" text-anchor="middle" fill="#2a34e0" stroke="#2a34e0" stroke-width="0.25">97.93</text>
<text x="963.3" y="635.4" text-anchor="middle" fill="#e02020" stroke="#e02020" stroke-width="0.25">-469.74</text>
<rect x="556" y="650.4" width="524" height="20.8" fill="#293955"/>
<rect x="556" y="671.8" width="524" height="1.8" fill="#aab2c8"/>
</svg>
<div class="t w" style="top:653.30px;left:952.00px;width:200px;text-align:center;">500%</div>
<div class="r" style="left:1072.80px;top:660.00px;width:5.40px;height:1.50px;background:#a2acc2;"></div>
</div>
</body></html>
